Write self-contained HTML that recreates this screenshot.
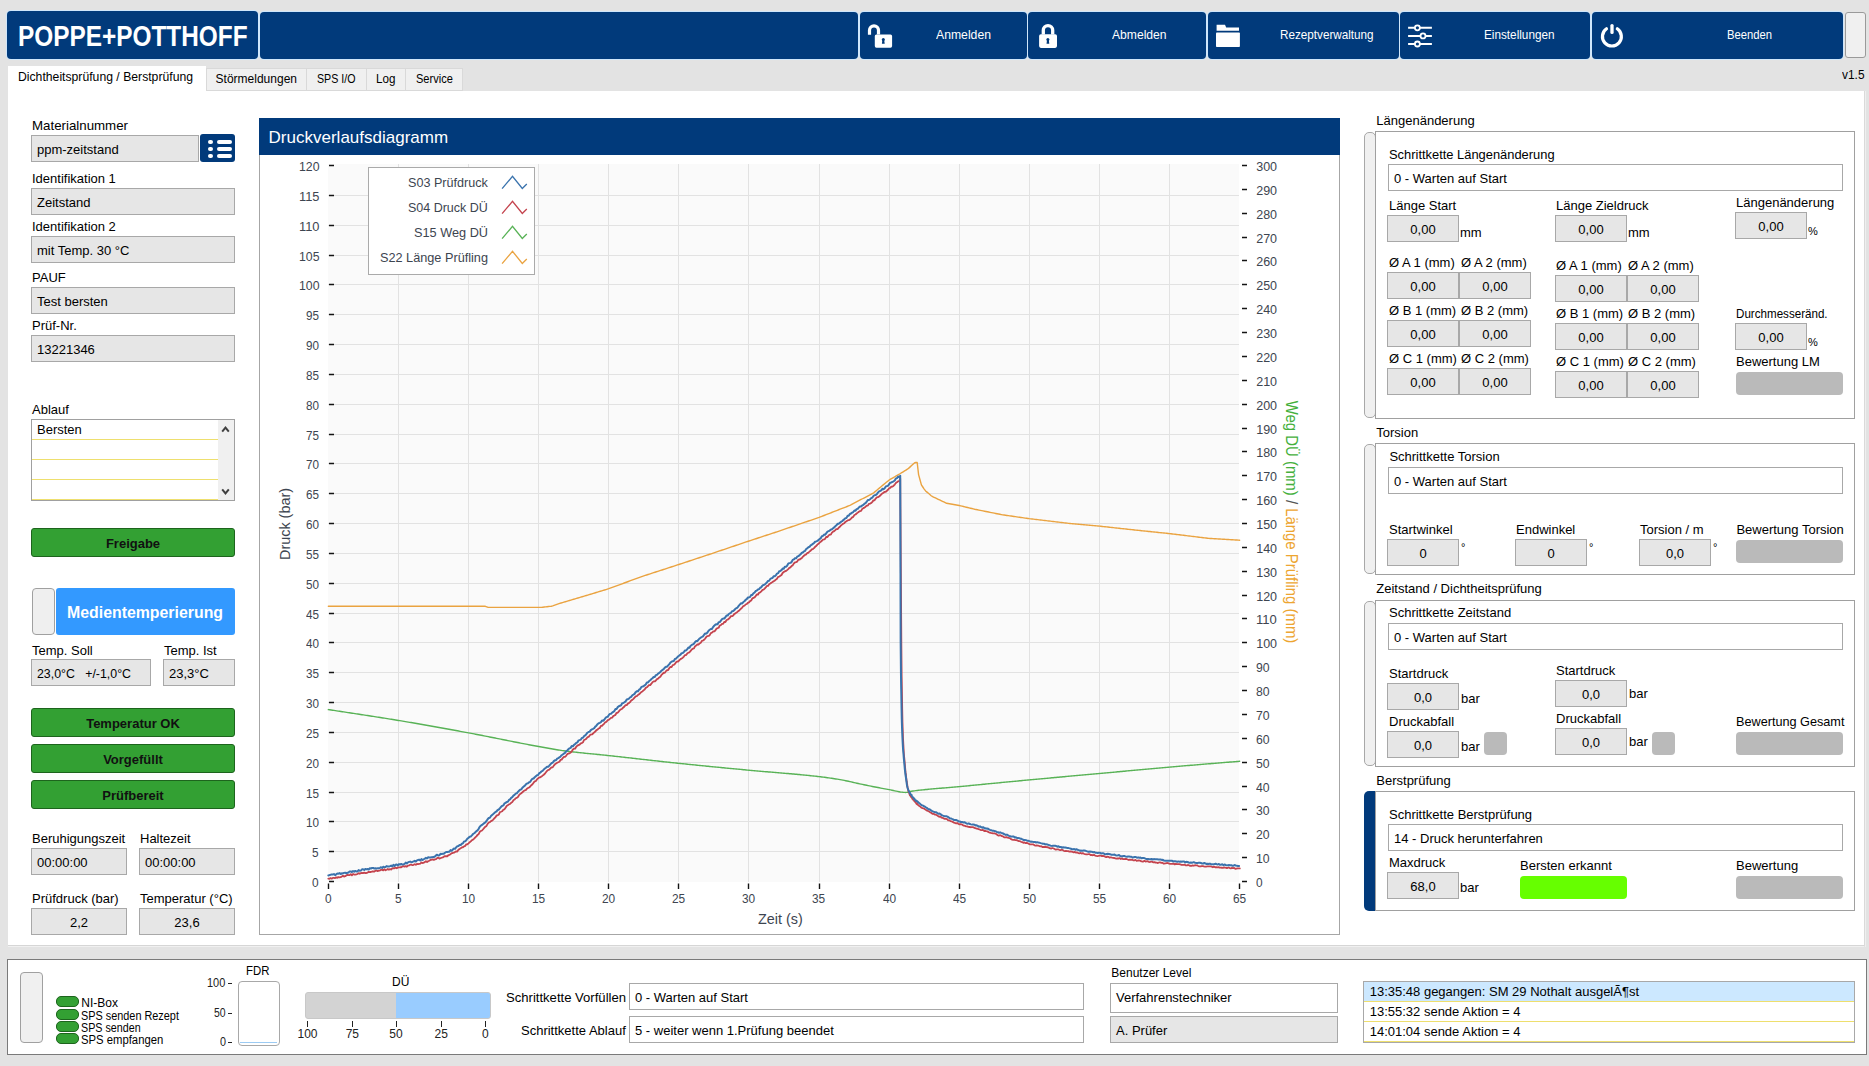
<!DOCTYPE html>
<html><head><meta charset="utf-8"><title>Druckverlauf</title>
<style>
html,body{margin:0;padding:0;}
body{width:1869px;height:1066px;position:relative;overflow:hidden;background:#e3e3e3;font-family:"Liberation Sans",sans-serif;}
.a{position:absolute;}
.t{position:absolute;white-space:pre;line-height:0;transform-origin:0 0;}
</style></head><body>
<div class="a" style="left:7px;top:11px;width:251px;height:48px;background:#013a7b;border-radius:4px;box-shadow:0 0 0 1px #cfe6fb;"></div>
<div class="t" style="left:18.20px;top:36.35px;font-size:29px;color:#fff;font-weight:bold;transform:scaleX(0.8406);">POPPE+POTTHOFF</div>
<div class="a" style="left:260px;top:12px;width:598px;height:47px;background:#013a7b;border-radius:4px;box-shadow:0 0 0 1px #cfe6fb;"></div>
<div class="a" style="left:860px;top:12px;width:167px;height:47px;background:#013a7b;border-radius:4px;box-shadow:0 0 0 1px #cfe6fb;"></div>
<div class="a" style="left:1028px;top:12px;width:178px;height:47px;background:#013a7b;border-radius:4px;box-shadow:0 0 0 1px #cfe6fb;"></div>
<div class="a" style="left:1208px;top:12px;width:191px;height:47px;background:#013a7b;border-radius:4px;box-shadow:0 0 0 1px #cfe6fb;"></div>
<div class="a" style="left:1400px;top:12px;width:190px;height:47px;background:#013a7b;border-radius:4px;box-shadow:0 0 0 1px #cfe6fb;"></div>
<div class="a" style="left:1592px;top:12px;width:251px;height:47px;background:#013a7b;border-radius:4px;box-shadow:0 0 0 1px #cfe6fb;"></div>
<div class="a" style="left:1845px;top:12px;width:21px;height:46px;background:#f0f0f0;border:1px solid #9a9a9a;box-sizing:border-box;border-radius:3px;"></div>
<svg class="a" style="left:0;top:0" width="1869" height="70" viewBox="0 0 1869 70">
<g fill="#fff">
<path d="M869.5,34.7 V30.35 A4.5,4.5 0 0 1 878.5,30.35 V34.4" fill="none" stroke="#fff" stroke-width="3.2"/>
<rect x="874.8" y="34.4" width="17.3" height="13.3" rx="1.6"/>
<path d="M1043.3,34.4 V30.2 A4.7,4.7 0 0 1 1052.7,30.2 V34.4" fill="none" stroke="#fff" stroke-width="3.3"/>
<rect x="1039.1" y="34.2" width="17.9" height="13.7" rx="1.8"/>
<path d="M1216.6,24.75 H1225 L1226.2,27.6 H1239 V30.8 H1216.6 Z"/>
<rect x="1216" y="32.5" width="23.9" height="14.55" rx="0.8"/>
<path d="M1408.1,27.8 H1431.9 M1408.1,35.9 H1431.9 M1408.1,44 H1431.9" stroke="#fff" stroke-width="2"/>
<path d="M1606.5,28.8 A9.45,9.45 0 1 0 1617.3,28.8" fill="none" stroke="#fff" stroke-width="3.2" stroke-linecap="round"/>
<path d="M1612,25.6 V32.4" stroke="#fff" stroke-width="3.3" stroke-linecap="round"/>
</g>
<g fill="#013a7b">
<circle cx="883.3" cy="39.4" r="1.5"/><path d="M882.4,40 L881.9,43.7 H884.7 L884.2,40 Z"/>
<circle cx="1047.9" cy="39.45" r="1.5"/><path d="M1047,40 L1046.5,43.7 H1049.3 L1048.8,40 Z"/>
</g>
<g fill="#013a7b" stroke="#fff" stroke-width="1.8">
<circle cx="1417.4" cy="27.8" r="2.5"/><circle cx="1423" cy="35.9" r="2.5"/><circle cx="1417.4" cy="44" r="2.5"/>
</g>
</svg>
<div class="t" style="left:936.00px;top:34.50px;font-size:13px;color:#fff;transform:scaleX(0.9396);">Anmelden</div>
<div class="t" style="left:1112.00px;top:34.50px;font-size:13px;color:#fff;transform:scaleX(0.9327);">Abmelden</div>
<div class="t" style="left:1280.40px;top:34.50px;font-size:13px;color:#fff;transform:scaleX(0.8995);">Rezeptverwaltung</div>
<div class="t" style="left:1483.50px;top:34.50px;font-size:13px;color:#fff;transform:scaleX(0.9032);">Einstellungen</div>
<div class="t" style="left:1726.60px;top:34.50px;font-size:13px;color:#fff;transform:scaleX(0.8645);">Beenden</div>
<div class="a" style="left:8px;top:66px;width:198px;height:26px;background:#fff;"></div>
<div class="t" style="left:17.50px;top:76.84px;font-size:12px;color:#000;transform:scaleX(1.0169);">Dichtheitsprüfung / Berstprüfung</div>
<div class="a" style="left:206px;top:68px;width:101px;height:23px;background:#f0f0f0;border:1px solid #d9d9d9;box-sizing:border-box;"></div>
<div class="t" style="left:215.60px;top:78.84px;font-size:12px;color:#000;">Störmeldungen</div>
<div class="a" style="left:306px;top:68px;width:61px;height:23px;background:#f0f0f0;border:1px solid #d9d9d9;box-sizing:border-box;"></div>
<div class="t" style="left:317.30px;top:78.84px;font-size:12px;color:#000;transform:scaleX(0.8882);">SPS I/O</div>
<div class="a" style="left:366px;top:68px;width:40px;height:23px;background:#f0f0f0;border:1px solid #d9d9d9;box-sizing:border-box;"></div>
<div class="t" style="left:376.30px;top:78.84px;font-size:12px;color:#000;transform:scaleX(0.9690);">Log</div>
<div class="a" style="left:405px;top:68px;width:58px;height:23px;background:#f0f0f0;border:1px solid #d9d9d9;box-sizing:border-box;"></div>
<div class="t" style="left:416.40px;top:78.84px;font-size:12px;color:#000;transform:scaleX(0.9197);">Service</div>
<div class="t" style="left:1842.00px;top:74.84px;font-size:12px;color:#000;transform:scaleX(0.9920);">v1.5</div>
<div class="a" style="left:8px;top:91px;width:1856px;height:854px;background:#fff;"></div>
<div class="a" style="left:8px;top:945px;width:1856px;height:1px;background:#d6d6d6;"></div>
<div class="a" style="left:8px;top:946px;width:1856px;height:1px;background:#f0f0f0;"></div>
<div class="a" style="left:1864px;top:91px;width:1px;height:855px;background:#dadada;"></div>
<div class="a" style="left:1865px;top:91px;width:1px;height:856px;background:#efefef;"></div>
<div class="t" style="left:32.00px;top:125.50px;font-size:13px;color:#000;transform:scaleX(1.0222);">Materialnummer</div>
<div class="a" style="left:31px;top:135px;width:168px;height:27px;background:#e6e6e6;border:1px solid #a8a8a8;box-sizing:border-box;"></div>
<div class="t" style="left:37.00px;top:149.50px;font-size:13px;color:#000;">ppm-zeitstand</div>
<div class="a" style="left:200px;top:134px;width:35px;height:28px;background:#013a7b;border-radius:3px;"></div>
<div class="a" style="left:208px;top:140.10px;width:4.9px;height:3.8px;border-radius:2px;background:#fff"></div>
<div class="a" style="left:216.6px;top:140.10px;width:15.2px;height:3.8px;border-radius:2px;background:#fff"></div>
<div class="a" style="left:208px;top:147.05px;width:4.9px;height:3.8px;border-radius:2px;background:#fff"></div>
<div class="a" style="left:216.6px;top:147.05px;width:15.2px;height:3.8px;border-radius:2px;background:#fff"></div>
<div class="a" style="left:208px;top:154.00px;width:4.9px;height:3.8px;border-radius:2px;background:#fff"></div>
<div class="a" style="left:216.6px;top:154.00px;width:15.2px;height:3.8px;border-radius:2px;background:#fff"></div>
<div class="t" style="left:32.00px;top:179.00px;font-size:13px;color:#000;">Identifikation 1</div>
<div class="a" style="left:31px;top:188px;width:204px;height:27px;background:#e6e6e6;border:1px solid #a8a8a8;box-sizing:border-box;"></div>
<div class="t" style="left:37.00px;top:202.50px;font-size:13px;color:#000;">Zeitstand</div>
<div class="t" style="left:32.00px;top:226.50px;font-size:13px;color:#000;">Identifikation 2</div>
<div class="a" style="left:31px;top:236px;width:204px;height:27px;background:#e6e6e6;border:1px solid #a8a8a8;box-sizing:border-box;"></div>
<div class="t" style="left:37.00px;top:250.50px;font-size:13px;color:#000;">mit Temp. 30 °C</div>
<div class="t" style="left:32.00px;top:277.50px;font-size:13px;color:#000;">PAUF</div>
<div class="a" style="left:31px;top:287px;width:204px;height:27px;background:#e6e6e6;border:1px solid #a8a8a8;box-sizing:border-box;"></div>
<div class="t" style="left:37.00px;top:301.50px;font-size:13px;color:#000;">Test bersten</div>
<div class="t" style="left:32.00px;top:325.50px;font-size:13px;color:#000;">Prüf-Nr.</div>
<div class="a" style="left:31px;top:335px;width:204px;height:27px;background:#e6e6e6;border:1px solid #a8a8a8;box-sizing:border-box;"></div>
<div class="t" style="left:37.00px;top:349.50px;font-size:13px;color:#000;">13221346</div>
<div class="t" style="left:32.00px;top:409.50px;font-size:13px;color:#000;">Ablauf</div>
<div class="a" style="left:31px;top:419px;width:204px;height:82px;background:#fff;border:1px solid #a0a0a0;box-sizing:border-box;"></div>
<div class="a" style="left:218px;top:420px;width:16px;height:80px;background:#f0f0f0;"></div>
<svg class="a" style="left:0;top:0" width="300" height="520" viewBox="0 0 300 520"><path d="M222.2,431.6 L225.5,427.6 L228.8,431.6 M222.2,489.4 L225.5,493.4 L228.8,489.4" fill="none" stroke="#404040" stroke-width="2"/></svg>
<div class="a" style="left:32px;top:439px;width:186px;height:1px;background:#eedf6e;"></div>
<div class="a" style="left:32px;top:459px;width:186px;height:1px;background:#eedf6e;"></div>
<div class="a" style="left:32px;top:479px;width:186px;height:1px;background:#eedf6e;"></div>
<div class="a" style="left:32px;top:499px;width:186px;height:1px;background:#eedf6e;"></div>
<div class="t" style="left:37.00px;top:429.50px;font-size:13px;color:#000;">Bersten</div>
<div class="a" style="left:31px;top:528px;width:204px;height:29px;background:#33a033;border:1px solid #1d641d;box-sizing:border-box;border-radius:3px;"></div>
<div class="t" style="left:105.91px;top:543.50px;font-size:13px;color:#111;font-weight:bold;">Freigabe</div>
<div class="a" style="left:32px;top:588px;width:23px;height:47px;background:#efefef;border:1px solid #a0a0a0;box-sizing:border-box;border-radius:4px;"></div>
<div class="a" style="left:56px;top:588px;width:179px;height:47px;background:#3399ff;border-radius:3px;"></div>
<div class="t" style="left:66.70px;top:613.46px;font-size:16px;color:#fff;font-weight:bold;transform:scaleX(0.9914);">Medientemperierung</div>
<div class="t" style="left:32.00px;top:650.50px;font-size:13px;color:#000;">Temp. Soll</div>
<div class="t" style="left:164.00px;top:650.50px;font-size:13px;color:#000;">Temp. Ist</div>
<div class="a" style="left:31px;top:659px;width:120px;height:27px;background:#e6e6e6;border:1px solid #a8a8a8;box-sizing:border-box;"></div>
<div class="t" style="left:37.00px;top:673.50px;font-size:13px;color:#000;transform:scaleX(0.9503);">23,0°C   +/-1,0°C</div>
<div class="a" style="left:163px;top:659px;width:72px;height:27px;background:#e6e6e6;border:1px solid #a8a8a8;box-sizing:border-box;"></div>
<div class="t" style="left:169.00px;top:673.50px;font-size:13px;color:#000;">23,3°C</div>
<div class="a" style="left:31px;top:708px;width:204px;height:29px;background:#33a033;border:1px solid #1d641d;box-sizing:border-box;border-radius:3px;"></div>
<div class="t" style="left:86.17px;top:723.50px;font-size:13px;color:#111;font-weight:bold;">Temperatur OK</div>
<div class="a" style="left:31px;top:744px;width:204px;height:29px;background:#33a033;border:1px solid #1d641d;box-sizing:border-box;border-radius:3px;"></div>
<div class="t" style="left:103.15px;top:759.50px;font-size:13px;color:#111;font-weight:bold;">Vorgefüllt</div>
<div class="a" style="left:31px;top:780px;width:204px;height:29px;background:#33a033;border:1px solid #1d641d;box-sizing:border-box;border-radius:3px;"></div>
<div class="t" style="left:102.30px;top:795.50px;font-size:13px;color:#111;font-weight:bold;">Prüfbereit</div>
<div class="t" style="left:32.00px;top:838.50px;font-size:13px;color:#000;">Beruhigungszeit</div>
<div class="t" style="left:140.00px;top:838.50px;font-size:13px;color:#000;">Haltezeit</div>
<div class="a" style="left:31px;top:848px;width:96px;height:27px;background:#e6e6e6;border:1px solid #a8a8a8;box-sizing:border-box;"></div>
<div class="t" style="left:37.00px;top:862.50px;font-size:13px;color:#000;">00:00:00</div>
<div class="a" style="left:139px;top:848px;width:96px;height:27px;background:#e6e6e6;border:1px solid #a8a8a8;box-sizing:border-box;"></div>
<div class="t" style="left:145.00px;top:862.50px;font-size:13px;color:#000;">00:00:00</div>
<div class="t" style="left:32.00px;top:898.50px;font-size:13px;color:#000;">Prüfdruck (bar)</div>
<div class="t" style="left:140.00px;top:898.50px;font-size:13px;color:#000;">Temperatur (°C)</div>
<div class="a" style="left:31px;top:908px;width:96px;height:27px;background:#e6e6e6;border:1px solid #a8a8a8;box-sizing:border-box;"></div>
<div class="t" style="left:69.96px;top:922.50px;font-size:13px;color:#000;">2,2</div>
<div class="a" style="left:139px;top:908px;width:96px;height:27px;background:#e6e6e6;border:1px solid #a8a8a8;box-sizing:border-box;"></div>
<div class="t" style="left:174.35px;top:922.50px;font-size:13px;color:#000;">23,6</div>
<div class="a" style="left:259px;top:118px;width:1081px;height:817px;background:#fff;border:1px solid #a6a6a6;box-sizing:border-box;"></div>
<div class="a" style="left:259px;top:118px;width:1081px;height:37px;background:#013a7b;"></div>
<div class="t" style="left:268.60px;top:138.11px;font-size:17px;color:#fff;">Druckverlaufsdiagramm</div>
<svg class="a" style="left:0;top:0" width="1869" height="1066" viewBox="0 0 1869 1066">
<rect x="328" y="164" width="911" height="718" fill="#fafafa"/>
<path d="M398.5,164V882M468.5,164V882M538.5,164V882M608.5,164V882M678.5,164V882M748.5,164V882M819.5,164V882M889.5,164V882M959.5,164V882M1029.5,164V882M1099.5,164V882M1169.5,164V882M328,851.5H1239M328,821.5H1239M328,792.5H1239M328,762.5H1239M328,732.5H1239M328,702.5H1239M328,672.5H1239M328,642.5H1239M328,613.5H1239M328,583.5H1239M328,553.5H1239M328,523.5H1239M328,493.5H1239M328,463.5H1239M328,434.5H1239M328,404.5H1239M328,374.5H1239M328,344.5H1239M328,314.5H1239M328,284.5H1239M328,255.5H1239M328,225.5H1239M328,195.5H1239" stroke="#e2e2e2" stroke-width="1" fill="none"/>
<path d="M329,881.5H334M329,851.5H334M329,821.5H334M329,792.5H334M329,762.5H334M329,732.5H334M329,702.5H334M329,672.5H334M329,642.5H334M329,613.5H334M329,583.5H334M329,553.5H334M329,523.5H334M329,493.5H334M329,463.5H334M329,434.5H334M329,404.5H334M329,374.5H334M329,344.5H334M329,314.5H334M329,284.5H334M329,255.5H334M329,225.5H334M329,195.5H334M329,165.5H334M1242,881.5H1247M1242,857.5H1247M1242,833.5H1247M1242,809.5H1247M1242,786.5H1247M1242,762.5H1247M1242,738.5H1247M1242,714.5H1247M1242,690.5H1247M1242,666.5H1247M1242,642.5H1247M1242,618.5H1247M1242,595.5H1247M1242,571.5H1247M1242,547.5H1247M1242,523.5H1247M1242,499.5H1247M1242,475.5H1247M1242,451.5H1247M1242,428.5H1247M1242,404.5H1247M1242,380.5H1247M1242,356.5H1247M1242,332.5H1247M1242,308.5H1247M1242,284.5H1247M1242,260.5H1247M1242,237.5H1247M1242,213.5H1247M1242,189.5H1247M1242,165.5H1247M328.5,883.6V889M398.5,883.6V889M468.5,883.6V889M538.5,883.6V889M608.5,883.6V889M678.5,883.6V889M748.5,883.6V889M819.5,883.6V889M889.5,883.6V889M959.5,883.6V889M1029.5,883.6V889M1099.5,883.6V889M1169.5,883.6V889M1239.5,883.6V889" stroke="#141414" stroke-width="1.4" fill="none"/>
<g fill="none" stroke-linejoin="round" stroke-linecap="round">
<path d="M328.35,606.32 L329.75,606.32 L331.15,606.32 L332.56,606.32 L333.96,606.32 L335.36,606.32 L336.76,606.32 L338.16,606.32 L339.57,606.32 L340.97,606.32 L342.37,606.32 L343.77,606.32 L345.17,606.32 L346.58,606.32 L347.98,606.32 L349.38,606.32 L350.78,606.32 L352.18,606.32 L353.59,606.32 L354.99,606.32 L356.39,606.32 L357.79,606.32 L359.19,606.32 L360.60,606.32 L362.00,606.32 L363.40,606.32 L364.80,606.32 L366.20,606.32 L367.61,606.32 L369.01,606.32 L370.41,606.32 L371.81,606.32 L373.21,606.32 L374.62,606.32 L376.02,606.32 L377.42,606.32 L378.82,606.32 L380.22,606.32 L381.63,606.32 L383.03,606.32 L384.43,606.32 L385.83,606.32 L387.23,606.32 L388.64,606.32 L390.04,606.32 L391.44,606.32 L392.84,606.32 L394.24,606.32 L395.65,606.32 L397.05,606.32 L398.45,606.32 L399.85,606.32 L401.25,606.32 L402.66,606.32 L404.06,606.32 L405.46,606.32 L406.86,606.32 L408.26,606.32 L409.67,606.32 L411.07,606.32 L412.47,606.32 L413.87,606.32 L415.27,606.32 L416.68,606.32 L418.08,606.32 L419.48,606.32 L420.88,606.32 L422.28,606.32 L423.69,606.32 L425.09,606.32 L426.49,606.32 L427.89,606.32 L429.29,606.32 L430.70,606.32 L432.10,606.32 L433.50,606.32 L434.90,606.32 L436.30,606.32 L437.71,606.32 L439.11,606.32 L440.51,606.32 L441.91,606.32 L443.31,606.32 L444.72,606.32 L446.12,606.32 L447.52,606.32 L448.92,606.32 L450.32,606.32 L451.73,606.32 L453.13,606.32 L454.53,606.32 L455.93,606.32 L457.33,606.32 L458.74,606.32 L460.14,606.32 L461.54,606.32 L462.94,606.32 L464.34,606.32 L465.75,606.32 L467.15,606.32 L468.55,606.32 L469.95,606.32 L471.35,606.32 L472.76,606.32 L474.16,606.32 L475.56,606.32 L476.96,606.32 L478.36,606.32 L479.77,606.32 L481.17,606.32 L482.57,606.32 L483.97,606.32 L485.37,606.32 L486.78,606.83 L488.18,607.34 L489.58,607.34 L490.98,607.34 L492.38,607.34 L493.79,607.34 L495.19,607.34 L496.59,607.34 L497.99,607.34 L499.39,607.34 L500.80,607.34 L502.20,607.34 L503.60,607.34 L505.00,607.34 L506.40,607.34 L507.81,607.34 L509.21,607.34 L510.61,607.34 L512.01,607.34 L513.41,607.34 L514.82,607.34 L516.22,607.34 L517.62,607.34 L519.02,607.34 L520.42,607.34 L521.83,607.34 L523.23,607.34 L524.63,607.34 L526.03,607.34 L527.43,607.34 L528.84,607.34 L530.24,607.34 L531.64,607.34 L533.04,607.34 L534.44,607.34 L535.85,607.34 L537.25,607.34 L538.65,607.34 L540.05,607.34 L541.45,607.34 L542.86,607.18 L544.26,607.03 L545.66,606.87 L547.06,606.71 L548.46,606.56 L549.87,606.40 L551.27,606.25 L552.67,605.86 L554.07,605.38 L555.47,604.90 L556.88,604.42 L558.28,603.94 L559.68,603.46 L561.08,602.97 L562.48,602.56 L563.89,602.15 L565.29,601.74 L566.69,601.32 L568.09,600.91 L569.49,600.50 L570.90,600.09 L572.30,599.68 L573.70,599.26 L575.10,598.85 L576.50,598.44 L577.91,598.03 L579.31,597.61 L580.71,597.20 L582.11,596.79 L583.51,596.37 L584.92,595.94 L586.32,595.52 L587.72,595.09 L589.12,594.66 L590.52,594.24 L591.93,593.81 L593.33,593.38 L594.73,592.96 L596.13,592.53 L597.53,592.11 L598.94,591.68 L600.34,591.25 L601.74,590.83 L603.14,590.40 L604.54,589.97 L605.95,589.55 L607.35,589.12 L608.75,588.69 L610.15,588.18 L611.55,587.66 L612.96,587.15 L614.36,586.63 L615.76,586.12 L617.16,585.60 L618.56,585.09 L619.97,584.57 L621.37,584.06 L622.77,583.54 L624.17,583.03 L625.57,582.51 L626.98,582.00 L628.38,581.48 L629.78,580.96 L631.18,580.45 L632.58,579.93 L633.99,579.42 L635.39,578.90 L636.79,578.39 L638.19,577.87 L639.59,577.36 L641.00,576.84 L642.40,576.33 L643.80,575.87 L645.20,575.42 L646.60,574.96 L648.01,574.51 L649.41,574.05 L650.81,573.60 L652.21,573.14 L653.61,572.69 L655.02,572.23 L656.42,571.78 L657.82,571.32 L659.22,570.87 L660.62,570.41 L662.03,569.96 L663.43,569.50 L664.83,569.05 L666.23,568.59 L667.63,568.14 L669.04,567.68 L670.44,567.23 L671.84,566.77 L673.24,566.32 L674.64,565.86 L676.05,565.41 L677.45,564.95 L678.85,564.50 L680.25,564.03 L681.65,563.57 L683.06,563.10 L684.46,562.64 L685.86,562.17 L687.26,561.71 L688.66,561.24 L690.07,560.78 L691.47,560.31 L692.87,559.85 L694.27,559.38 L695.67,558.92 L697.08,558.45 L698.48,557.99 L699.88,557.52 L701.28,557.06 L702.68,556.59 L704.09,556.13 L705.49,555.66 L706.89,555.20 L708.29,554.73 L709.69,554.27 L711.10,553.80 L712.50,553.33 L713.90,552.85 L715.30,552.38 L716.70,551.91 L718.11,551.43 L719.51,550.96 L720.91,550.49 L722.31,550.01 L723.71,549.54 L725.12,549.06 L726.52,548.59 L727.92,548.12 L729.32,547.64 L730.72,547.17 L732.13,546.70 L733.53,546.22 L734.93,545.75 L736.33,545.28 L737.73,544.80 L739.14,544.33 L740.54,543.86 L741.94,543.38 L743.34,542.91 L744.74,542.43 L746.15,541.96 L747.55,541.49 L748.95,541.01 L750.35,540.55 L751.75,540.09 L753.16,539.63 L754.56,539.17 L755.96,538.71 L757.36,538.25 L758.76,537.79 L760.17,537.33 L761.57,536.87 L762.97,536.41 L764.37,535.95 L765.77,535.49 L767.18,535.03 L768.58,534.57 L769.98,534.11 L771.38,533.65 L772.78,533.19 L774.19,532.73 L775.59,532.27 L776.99,531.79 L778.39,531.31 L779.79,530.83 L781.20,530.35 L782.60,529.87 L784.00,529.39 L785.40,528.91 L786.80,528.43 L788.21,527.95 L789.61,527.47 L791.01,527.00 L792.41,526.52 L793.81,526.04 L795.22,525.56 L796.62,525.08 L798.02,524.60 L799.42,524.12 L800.82,523.64 L802.23,523.16 L803.63,522.68 L805.03,522.20 L806.43,521.73 L807.83,521.25 L809.24,520.77 L810.64,520.29 L812.04,519.81 L813.44,519.33 L814.84,518.85 L816.25,518.37 L817.65,517.89 L819.05,517.41 L820.45,516.87 L821.85,516.32 L823.26,515.77 L824.66,515.23 L826.06,514.68 L827.46,514.13 L828.86,513.59 L830.27,513.04 L831.67,512.49 L833.07,511.95 L834.47,511.40 L835.87,510.85 L837.28,510.31 L838.68,509.76 L840.08,509.21 L841.48,508.67 L842.88,508.12 L844.29,507.57 L845.69,507.03 L847.09,506.48 L848.49,505.93 L849.89,505.39 L851.30,504.70 L852.70,503.96 L854.10,503.21 L855.50,502.47 L856.90,501.73 L858.31,500.98 L859.71,500.24 L861.11,499.49 L862.51,498.75 L863.91,498.01 L865.32,497.26 L866.72,496.52 L868.12,495.77 L869.52,495.03 L870.92,494.28 L872.33,493.54 L873.73,492.80 L875.13,491.63 L876.53,490.47 L877.93,489.31 L879.34,488.15 L880.74,486.98 L882.14,485.82 L883.54,484.66 L884.94,483.50 L886.35,482.33 L887.75,481.17 L889.15,480.01 L890.55,479.20 L891.95,478.38 L893.36,477.57 L894.76,476.75 L896.16,475.94 L897.56,475.12 L898.96,474.31 L900.37,473.50 L901.77,472.64 L903.17,471.78 L904.57,470.92 L905.97,470.06 L907.38,469.21 L908.78,468.14 L910.18,466.86 L911.58,465.58 L912.98,464.29 L914.39,463.01 L915.79,462.50 L917.19,462.50 L918.59,474.57 L919.99,479.74 L921.40,484.91 L922.80,487.01 L924.20,489.11 L925.60,490.94 L927.00,492.14 L928.41,493.33 L929.81,494.53 L931.21,495.72 L932.61,496.60 L934.01,497.27 L935.42,497.95 L936.82,498.62 L938.22,499.29 L939.62,499.96 L941.02,500.63 L942.43,501.30 L943.83,501.97 L945.23,502.64 L946.63,503.31 L948.03,503.56 L949.44,503.80 L950.84,504.05 L952.24,504.29 L953.64,504.54 L955.04,504.79 L956.45,505.03 L957.85,505.28 L959.25,505.52 L960.65,505.86 L962.05,506.19 L963.46,506.53 L964.86,506.87 L966.26,507.20 L967.66,507.54 L969.06,507.88 L970.47,508.21 L971.87,508.55 L973.27,508.88 L974.67,509.22 L976.07,509.51 L977.48,509.79 L978.88,510.07 L980.28,510.35 L981.68,510.63 L983.08,510.92 L984.49,511.20 L985.89,511.48 L987.29,511.76 L988.69,512.04 L990.09,512.32 L991.50,512.60 L992.90,512.88 L994.30,513.16 L995.70,513.44 L997.10,513.72 L998.51,514.00 L999.91,514.29 L1001.31,514.57 L1002.71,514.85 L1004.11,515.06 L1005.52,515.26 L1006.92,515.46 L1008.32,515.66 L1009.72,515.86 L1011.12,516.06 L1012.53,516.26 L1013.93,516.47 L1015.33,516.67 L1016.73,516.87 L1018.13,517.07 L1019.54,517.27 L1020.94,517.47 L1022.34,517.67 L1023.74,517.87 L1025.14,518.07 L1026.55,518.27 L1027.95,518.47 L1029.35,518.67 L1030.75,518.83 L1032.15,519.00 L1033.56,519.17 L1034.96,519.33 L1036.36,519.50 L1037.76,519.67 L1039.16,519.83 L1040.57,520.00 L1041.97,520.17 L1043.37,520.33 L1044.77,520.50 L1046.17,520.66 L1047.58,520.83 L1048.98,521.00 L1050.38,521.16 L1051.78,521.33 L1053.18,521.50 L1054.59,521.66 L1055.99,521.83 L1057.39,522.00 L1058.79,522.16 L1060.19,522.33 L1061.60,522.50 L1063.00,522.66 L1064.40,522.83 L1065.80,523.00 L1067.20,523.16 L1068.61,523.33 L1070.01,523.46 L1071.41,523.58 L1072.81,523.71 L1074.21,523.84 L1075.62,523.97 L1077.02,524.09 L1078.42,524.22 L1079.82,524.35 L1081.22,524.48 L1082.63,524.60 L1084.03,524.73 L1085.43,524.86 L1086.83,524.99 L1088.23,525.12 L1089.64,525.24 L1091.04,525.37 L1092.44,525.50 L1093.84,525.63 L1095.24,525.75 L1096.65,525.88 L1098.05,526.01 L1099.45,526.14 L1100.85,526.29 L1102.25,526.44 L1103.66,526.60 L1105.06,526.75 L1106.46,526.90 L1107.86,527.06 L1109.26,527.21 L1110.67,527.37 L1112.07,527.52 L1113.47,527.67 L1114.87,527.83 L1116.27,527.98 L1117.68,528.13 L1119.08,528.29 L1120.48,528.44 L1121.88,528.59 L1123.28,528.75 L1124.69,528.90 L1126.09,529.06 L1127.49,529.21 L1128.89,529.36 L1130.29,529.52 L1131.70,529.67 L1133.10,529.82 L1134.50,529.97 L1135.90,530.12 L1137.30,530.26 L1138.71,530.41 L1140.11,530.55 L1141.51,530.70 L1142.91,530.84 L1144.31,530.99 L1145.72,531.14 L1147.12,531.28 L1148.52,531.43 L1149.92,531.57 L1151.32,531.72 L1152.73,531.86 L1154.13,532.01 L1155.53,532.15 L1156.93,532.30 L1158.33,532.44 L1159.74,532.59 L1161.14,532.73 L1162.54,532.88 L1163.94,533.02 L1165.34,533.17 L1166.75,533.31 L1168.15,533.46 L1169.55,533.61 L1170.95,533.78 L1172.35,533.95 L1173.76,534.12 L1175.16,534.29 L1176.56,534.46 L1177.96,534.63 L1179.36,534.80 L1180.77,534.97 L1182.17,535.14 L1183.57,535.31 L1184.97,535.48 L1186.37,535.65 L1187.78,535.82 L1189.18,536.00 L1190.58,536.17 L1191.98,536.34 L1193.38,536.51 L1194.79,536.68 L1196.19,536.85 L1197.59,537.02 L1198.99,537.19 L1200.39,537.36 L1201.80,537.53 L1203.20,537.70 L1204.60,537.87 L1206.00,538.04 L1207.40,538.21 L1208.81,538.39 L1210.21,538.47 L1211.61,538.55 L1213.01,538.63 L1214.41,538.71 L1215.82,538.79 L1217.22,538.87 L1218.62,538.96 L1220.02,539.04 L1221.42,539.12 L1222.83,539.20 L1224.23,539.28 L1225.63,539.36 L1227.03,539.44 L1228.43,539.53 L1229.84,539.61 L1231.24,539.69 L1232.64,539.77 L1234.04,539.85 L1235.44,539.93 L1236.85,540.01 L1238.25,540.10 L1239.65,540.18" stroke="#eaa340" stroke-width="1.4"/>
<path d="M328.35,709.57 L329.75,709.79 L331.15,710.00 L332.56,710.22 L333.96,710.43 L335.36,710.65 L336.76,710.86 L338.16,711.08 L339.57,711.29 L340.97,711.51 L342.37,711.72 L343.77,711.93 L345.17,712.15 L346.58,712.36 L347.98,712.57 L349.38,712.79 L350.78,713.00 L352.18,713.21 L353.59,713.42 L354.99,713.64 L356.39,713.85 L357.79,714.06 L359.19,714.27 L360.60,714.49 L362.00,714.70 L363.40,714.92 L364.80,715.13 L366.20,715.34 L367.61,715.56 L369.01,715.77 L370.41,715.99 L371.81,716.21 L373.21,716.42 L374.62,716.64 L376.02,716.86 L377.42,717.07 L378.82,717.29 L380.22,717.51 L381.63,717.73 L383.03,717.95 L384.43,718.18 L385.83,718.40 L387.23,718.62 L388.64,718.85 L390.04,719.07 L391.44,719.30 L392.84,719.52 L394.24,719.75 L395.65,719.98 L397.05,720.21 L398.45,720.44 L399.85,720.68 L401.25,720.91 L402.66,721.14 L404.06,721.38 L405.46,721.61 L406.86,721.85 L408.26,722.09 L409.67,722.33 L411.07,722.56 L412.47,722.80 L413.87,723.04 L415.27,723.29 L416.68,723.53 L418.08,723.77 L419.48,724.01 L420.88,724.26 L422.28,724.50 L423.69,724.75 L425.09,724.99 L426.49,725.24 L427.89,725.49 L429.29,725.74 L430.70,725.98 L432.10,726.23 L433.50,726.48 L434.90,726.73 L436.30,726.98 L437.71,727.23 L439.11,727.49 L440.51,727.74 L441.91,727.99 L443.31,728.24 L444.72,728.50 L446.12,728.75 L447.52,729.01 L448.92,729.26 L450.32,729.52 L451.73,729.77 L453.13,730.03 L454.53,730.29 L455.93,730.54 L457.33,730.80 L458.74,731.06 L460.14,731.32 L461.54,731.57 L462.94,731.83 L464.34,732.09 L465.75,732.35 L467.15,732.61 L468.55,732.87 L469.95,733.13 L471.35,733.39 L472.76,733.66 L474.16,733.93 L475.56,734.19 L476.96,734.46 L478.36,734.73 L479.77,735.00 L481.17,735.28 L482.57,735.55 L483.97,735.83 L485.37,736.10 L486.78,736.38 L488.18,736.66 L489.58,736.94 L490.98,737.22 L492.38,737.50 L493.79,737.78 L495.19,738.06 L496.59,738.34 L497.99,738.62 L499.39,738.90 L500.80,739.18 L502.20,739.46 L503.60,739.74 L505.00,740.03 L506.40,740.31 L507.81,740.59 L509.21,740.87 L510.61,741.15 L512.01,741.42 L513.41,741.70 L514.82,741.98 L516.22,742.26 L517.62,742.53 L519.02,742.81 L520.42,743.08 L521.83,743.35 L523.23,743.62 L524.63,743.89 L526.03,744.16 L527.43,744.43 L528.84,744.69 L530.24,744.96 L531.64,745.22 L533.04,745.48 L534.44,745.73 L535.85,745.99 L537.25,746.24 L538.65,746.49 L540.05,746.75 L541.45,747.00 L542.86,747.25 L544.26,747.51 L545.66,747.76 L547.06,748.01 L548.46,748.27 L549.87,748.52 L551.27,748.77 L552.67,749.01 L554.07,749.25 L555.47,749.49 L556.88,749.72 L558.28,749.95 L559.68,750.17 L561.08,750.38 L562.48,750.59 L563.89,750.79 L565.29,750.98 L566.69,751.16 L568.09,751.34 L569.49,751.51 L570.90,751.68 L572.30,751.85 L573.70,752.01 L575.10,752.17 L576.50,752.32 L577.91,752.47 L579.31,752.62 L580.71,752.77 L582.11,752.92 L583.51,753.06 L584.92,753.20 L586.32,753.34 L587.72,753.48 L589.12,753.61 L590.52,753.75 L591.93,753.89 L593.33,754.02 L594.73,754.16 L596.13,754.30 L597.53,754.43 L598.94,754.57 L600.34,754.71 L601.74,754.85 L603.14,754.99 L604.54,755.13 L605.95,755.28 L607.35,755.43 L608.75,755.58 L610.15,755.73 L611.55,755.88 L612.96,756.03 L614.36,756.19 L615.76,756.34 L617.16,756.50 L618.56,756.65 L619.97,756.81 L621.37,756.96 L622.77,757.12 L624.17,757.28 L625.57,757.43 L626.98,757.59 L628.38,757.75 L629.78,757.91 L631.18,758.07 L632.58,758.23 L633.99,758.38 L635.39,758.54 L636.79,758.70 L638.19,758.86 L639.59,759.02 L641.00,759.18 L642.40,759.34 L643.80,759.50 L645.20,759.65 L646.60,759.81 L648.01,759.97 L649.41,760.13 L650.81,760.29 L652.21,760.44 L653.61,760.60 L655.02,760.76 L656.42,760.92 L657.82,761.07 L659.22,761.23 L660.62,761.38 L662.03,761.54 L663.43,761.69 L664.83,761.85 L666.23,762.00 L667.63,762.15 L669.04,762.30 L670.44,762.45 L671.84,762.60 L673.24,762.75 L674.64,762.90 L676.05,763.05 L677.45,763.20 L678.85,763.34 L680.25,763.49 L681.65,763.63 L683.06,763.78 L684.46,763.92 L685.86,764.07 L687.26,764.21 L688.66,764.35 L690.07,764.50 L691.47,764.64 L692.87,764.78 L694.27,764.92 L695.67,765.06 L697.08,765.20 L698.48,765.34 L699.88,765.48 L701.28,765.62 L702.68,765.76 L704.09,765.90 L705.49,766.04 L706.89,766.18 L708.29,766.31 L709.69,766.45 L711.10,766.59 L712.50,766.73 L713.90,766.86 L715.30,767.00 L716.70,767.14 L718.11,767.27 L719.51,767.41 L720.91,767.54 L722.31,767.68 L723.71,767.81 L725.12,767.95 L726.52,768.08 L727.92,768.22 L729.32,768.35 L730.72,768.48 L732.13,768.62 L733.53,768.75 L734.93,768.89 L736.33,769.02 L737.73,769.15 L739.14,769.29 L740.54,769.42 L741.94,769.55 L743.34,769.68 L744.74,769.82 L746.15,769.95 L747.55,770.08 L748.95,770.22 L750.35,770.35 L751.75,770.48 L753.16,770.60 L754.56,770.73 L755.96,770.86 L757.36,770.98 L758.76,771.10 L760.17,771.23 L761.57,771.35 L762.97,771.47 L764.37,771.58 L765.77,771.70 L767.18,771.82 L768.58,771.94 L769.98,772.05 L771.38,772.17 L772.78,772.29 L774.19,772.40 L775.59,772.52 L776.99,772.63 L778.39,772.75 L779.79,772.86 L781.20,772.98 L782.60,773.10 L784.00,773.22 L785.40,773.33 L786.80,773.45 L788.21,773.57 L789.61,773.69 L791.01,773.81 L792.41,773.94 L793.81,774.06 L795.22,774.19 L796.62,774.31 L798.02,774.44 L799.42,774.57 L800.82,774.70 L802.23,774.83 L803.63,774.97 L805.03,775.11 L806.43,775.25 L807.83,775.39 L809.24,775.53 L810.64,775.68 L812.04,775.83 L813.44,775.98 L814.84,776.13 L816.25,776.29 L817.65,776.45 L819.05,776.61 L820.45,776.77 L821.85,776.95 L823.26,777.12 L824.66,777.31 L826.06,777.50 L827.46,777.69 L828.86,777.89 L830.27,778.09 L831.67,778.30 L833.07,778.51 L834.47,778.73 L835.87,778.96 L837.28,779.18 L838.68,779.42 L840.08,779.65 L841.48,779.90 L842.88,780.16 L844.29,780.43 L845.69,780.71 L847.09,781.00 L848.49,781.30 L849.89,781.61 L851.30,781.92 L852.70,782.24 L854.10,782.56 L855.50,782.88 L856.90,783.20 L858.31,783.52 L859.71,783.83 L861.11,784.14 L862.51,784.44 L863.91,784.74 L865.32,785.03 L866.72,785.31 L868.12,785.59 L869.52,785.88 L870.92,786.16 L872.33,786.44 L873.73,786.71 L875.13,786.99 L876.53,787.26 L877.93,787.54 L879.34,787.81 L880.74,788.07 L882.14,788.34 L883.54,788.60 L884.94,788.86 L886.35,789.12 L887.75,789.38 L889.15,789.63 L890.55,789.90 L891.95,790.20 L893.36,790.51 L894.76,790.82 L896.16,791.14 L897.56,791.44 L898.96,791.72 L900.37,791.97 L901.77,792.17 L903.17,792.32 L904.57,792.42 L905.97,792.43 L907.38,792.21 L908.78,791.82 L910.18,791.49 L911.58,791.25 L912.98,791.03 L914.39,790.83 L915.79,790.64 L917.19,790.46 L918.59,790.29 L919.99,790.14 L921.40,789.98 L922.80,789.84 L924.20,789.70 L925.60,789.56 L927.00,789.43 L928.41,789.30 L929.81,789.17 L931.21,789.05 L932.61,788.92 L934.01,788.79 L935.42,788.66 L936.82,788.54 L938.22,788.42 L939.62,788.30 L941.02,788.18 L942.43,788.07 L943.83,787.95 L945.23,787.84 L946.63,787.72 L948.03,787.61 L949.44,787.49 L950.84,787.38 L952.24,787.26 L953.64,787.14 L955.04,787.02 L956.45,786.90 L957.85,786.77 L959.25,786.65 L960.65,786.52 L962.05,786.38 L963.46,786.25 L964.86,786.11 L966.26,785.97 L967.66,785.83 L969.06,785.69 L970.47,785.55 L971.87,785.41 L973.27,785.27 L974.67,785.13 L976.07,785.00 L977.48,784.86 L978.88,784.73 L980.28,784.59 L981.68,784.45 L983.08,784.32 L984.49,784.18 L985.89,784.05 L987.29,783.91 L988.69,783.77 L990.09,783.64 L991.50,783.50 L992.90,783.37 L994.30,783.23 L995.70,783.10 L997.10,782.96 L998.51,782.83 L999.91,782.69 L1001.31,782.56 L1002.71,782.42 L1004.11,782.29 L1005.52,782.15 L1006.92,782.02 L1008.32,781.88 L1009.72,781.75 L1011.12,781.62 L1012.53,781.48 L1013.93,781.35 L1015.33,781.22 L1016.73,781.08 L1018.13,780.95 L1019.54,780.82 L1020.94,780.69 L1022.34,780.55 L1023.74,780.42 L1025.14,780.29 L1026.55,780.16 L1027.95,780.03 L1029.35,779.89 L1030.75,779.76 L1032.15,779.63 L1033.56,779.50 L1034.96,779.37 L1036.36,779.24 L1037.76,779.11 L1039.16,778.98 L1040.57,778.85 L1041.97,778.72 L1043.37,778.59 L1044.77,778.47 L1046.17,778.34 L1047.58,778.21 L1048.98,778.08 L1050.38,777.95 L1051.78,777.82 L1053.18,777.70 L1054.59,777.57 L1055.99,777.44 L1057.39,777.31 L1058.79,777.19 L1060.19,777.06 L1061.60,776.93 L1063.00,776.80 L1064.40,776.68 L1065.80,776.55 L1067.20,776.42 L1068.61,776.30 L1070.01,776.17 L1071.41,776.04 L1072.81,775.92 L1074.21,775.79 L1075.62,775.66 L1077.02,775.54 L1078.42,775.41 L1079.82,775.28 L1081.22,775.16 L1082.63,775.03 L1084.03,774.90 L1085.43,774.77 L1086.83,774.65 L1088.23,774.52 L1089.64,774.39 L1091.04,774.27 L1092.44,774.14 L1093.84,774.01 L1095.24,773.88 L1096.65,773.76 L1098.05,773.63 L1099.45,773.50 L1100.85,773.37 L1102.25,773.25 L1103.66,773.12 L1105.06,772.99 L1106.46,772.86 L1107.86,772.73 L1109.26,772.60 L1110.67,772.47 L1112.07,772.34 L1113.47,772.21 L1114.87,772.08 L1116.27,771.95 L1117.68,771.82 L1119.08,771.70 L1120.48,771.57 L1121.88,771.44 L1123.28,771.31 L1124.69,771.18 L1126.09,771.05 L1127.49,770.92 L1128.89,770.79 L1130.29,770.66 L1131.70,770.53 L1133.10,770.40 L1134.50,770.27 L1135.90,770.14 L1137.30,770.01 L1138.71,769.88 L1140.11,769.75 L1141.51,769.62 L1142.91,769.50 L1144.31,769.37 L1145.72,769.24 L1147.12,769.11 L1148.52,768.98 L1149.92,768.86 L1151.32,768.73 L1152.73,768.60 L1154.13,768.48 L1155.53,768.35 L1156.93,768.22 L1158.33,768.10 L1159.74,767.97 L1161.14,767.85 L1162.54,767.72 L1163.94,767.60 L1165.34,767.48 L1166.75,767.35 L1168.15,767.23 L1169.55,767.11 L1170.95,766.99 L1172.35,766.86 L1173.76,766.74 L1175.16,766.62 L1176.56,766.50 L1177.96,766.38 L1179.36,766.26 L1180.77,766.14 L1182.17,766.02 L1183.57,765.90 L1184.97,765.79 L1186.37,765.67 L1187.78,765.55 L1189.18,765.43 L1190.58,765.31 L1191.98,765.20 L1193.38,765.08 L1194.79,764.96 L1196.19,764.85 L1197.59,764.73 L1198.99,764.61 L1200.39,764.50 L1201.80,764.38 L1203.20,764.26 L1204.60,764.15 L1206.00,764.03 L1207.40,763.92 L1208.81,763.80 L1210.21,763.69 L1211.61,763.57 L1213.01,763.45 L1214.41,763.34 L1215.82,763.22 L1217.22,763.11 L1218.62,762.99 L1220.02,762.88 L1221.42,762.76 L1222.83,762.65 L1224.23,762.53 L1225.63,762.42 L1227.03,762.30 L1228.43,762.18 L1229.84,762.07 L1231.24,761.95 L1232.64,761.84 L1234.04,761.72 L1235.44,761.60 L1236.85,761.49 L1238.25,761.37 L1239.65,761.25" stroke="#58b256" stroke-width="1.4"/>
<path d="M328.35,878.56 L329.47,878.80 L330.59,878.06 L331.71,878.70 L332.84,877.85 L333.96,877.90 L335.08,878.15 L336.20,877.32 L337.32,877.80 L338.44,877.04 L339.57,877.37 L340.69,877.14 L341.81,876.47 L342.93,875.70 L344.05,876.52 L345.17,876.19 L346.30,875.42 L347.42,874.77 L348.54,875.11 L349.66,875.18 L350.78,874.16 L351.90,875.31 L353.03,873.96 L354.15,874.59 L355.27,874.61 L356.39,874.47 L357.51,874.01 L358.63,873.11 L359.75,873.84 L360.88,873.09 L362.00,872.84 L363.12,873.06 L364.24,872.64 L365.36,873.17 L366.48,873.01 L367.61,872.64 L368.73,871.80 L369.85,872.01 L370.97,872.02 L372.09,871.47 L373.21,871.51 L374.34,871.57 L375.46,870.71 L376.58,870.69 L377.70,871.19 L378.82,870.56 L379.94,870.48 L381.07,869.82 L382.19,869.87 L383.31,870.35 L384.43,869.19 L385.55,870.27 L386.67,869.68 L387.79,869.02 L388.92,869.72 L390.04,869.07 L391.16,869.54 L392.28,868.47 L393.40,868.15 L394.52,868.24 L395.65,867.63 L396.77,868.24 L397.89,867.50 L399.01,867.45 L400.13,867.27 L401.25,867.24 L402.38,866.48 L403.50,866.12 L404.62,866.58 L405.74,866.08 L406.86,866.72 L407.98,865.57 L409.11,865.42 L410.23,864.69 L411.35,864.69 L412.47,865.22 L413.59,864.82 L414.71,864.17 L415.83,864.84 L416.96,863.95 L418.08,864.11 L419.20,863.91 L420.32,863.72 L421.44,862.43 L422.56,863.07 L423.69,862.62 L424.81,862.13 L425.93,861.16 L427.05,862.00 L428.17,861.18 L429.29,860.74 L430.42,859.96 L431.54,859.75 L432.66,859.38 L433.78,859.92 L434.90,859.41 L436.02,859.19 L437.15,858.13 L438.27,857.70 L439.39,858.54 L440.51,858.18 L441.63,857.76 L442.75,857.41 L443.87,856.69 L445.00,856.17 L446.12,856.26 L447.24,856.23 L448.36,855.22 L449.48,854.86 L450.60,854.13 L451.73,853.11 L452.85,853.00 L453.97,852.73 L455.09,852.01 L456.21,851.31 L457.33,851.54 L458.46,849.63 L459.58,849.07 L460.70,848.17 L461.82,847.49 L462.94,847.25 L464.06,846.40 L465.19,845.96 L466.31,844.32 L467.43,844.25 L468.55,843.34 L469.67,842.23 L470.79,841.39 L471.91,840.19 L473.04,839.62 L474.16,838.66 L475.28,837.38 L476.40,836.35 L477.52,834.85 L478.64,834.20 L479.77,831.82 L480.89,831.03 L482.01,830.53 L483.13,829.21 L484.25,827.91 L485.37,826.74 L486.50,825.95 L487.62,823.80 L488.74,822.52 L489.86,822.22 L490.98,821.14 L492.10,820.66 L493.23,819.59 L494.35,818.20 L495.47,817.27 L496.59,815.42 L497.71,815.34 L498.83,814.51 L499.95,812.15 L501.08,811.73 L502.20,811.25 L503.32,809.66 L504.44,809.38 L505.56,807.65 L506.68,805.99 L507.81,805.14 L508.93,804.37 L510.05,803.99 L511.17,802.83 L512.29,802.11 L513.41,800.25 L514.54,799.59 L515.66,798.24 L516.78,797.89 L517.90,797.05 L519.02,795.22 L520.14,793.98 L521.27,793.18 L522.39,792.27 L523.51,791.27 L524.63,790.40 L525.75,790.15 L526.87,788.76 L527.99,788.01 L529.12,787.51 L530.24,786.53 L531.36,785.20 L532.48,784.26 L533.60,782.67 L534.72,781.32 L535.85,781.08 L536.97,779.41 L538.09,778.38 L539.21,777.46 L540.33,777.34 L541.45,776.59 L542.58,775.62 L543.70,774.71 L544.82,773.75 L545.94,772.21 L547.06,770.87 L548.18,770.02 L549.31,769.60 L550.43,768.42 L551.55,767.28 L552.67,767.38 L553.79,765.63 L554.91,764.35 L556.03,763.61 L557.16,762.73 L558.28,762.20 L559.40,761.70 L560.52,759.90 L561.64,759.64 L562.76,758.04 L563.89,756.87 L565.01,756.77 L566.13,755.83 L567.25,754.12 L568.37,753.50 L569.49,753.36 L570.62,752.48 L571.74,751.51 L572.86,749.49 L573.98,748.69 L575.10,748.70 L576.22,746.78 L577.35,745.62 L578.47,745.14 L579.59,744.64 L580.71,743.41 L581.83,743.07 L582.95,742.30 L584.07,739.98 L585.20,739.50 L586.32,738.73 L587.44,737.20 L588.56,736.98 L589.68,735.40 L590.80,734.53 L591.93,734.46 L593.05,733.46 L594.17,732.45 L595.29,731.58 L596.41,730.14 L597.53,729.67 L598.66,728.49 L599.78,727.96 L600.90,725.89 L602.02,725.74 L603.14,724.65 L604.26,723.52 L605.39,722.11 L606.51,721.86 L607.63,720.20 L608.75,719.84 L609.87,718.85 L610.99,717.92 L612.11,717.69 L613.24,716.14 L614.36,715.56 L615.48,714.87 L616.60,712.78 L617.72,712.73 L618.84,711.34 L619.97,710.03 L621.09,709.33 L622.21,708.71 L623.33,707.48 L624.45,706.48 L625.57,705.20 L626.70,705.22 L627.82,703.62 L628.94,703.12 L630.06,702.13 L631.18,700.47 L632.30,699.90 L633.43,698.87 L634.55,697.64 L635.67,696.47 L636.79,696.19 L637.91,695.00 L639.03,694.20 L640.15,693.24 L641.28,692.03 L642.40,691.43 L643.52,690.36 L644.64,689.49 L645.76,687.88 L646.88,687.27 L648.01,686.07 L649.13,685.03 L650.25,685.06 L651.37,683.68 L652.49,682.18 L653.61,681.38 L654.74,681.43 L655.86,680.51 L656.98,679.10 L658.10,678.68 L659.22,677.49 L660.34,676.78 L661.47,674.98 L662.59,673.87 L663.71,672.76 L664.83,672.87 L665.95,671.12 L667.07,670.25 L668.19,670.05 L669.32,668.04 L670.44,666.97 L671.56,667.10 L672.68,665.10 L673.80,664.95 L674.92,663.88 L676.05,662.21 L677.17,661.49 L678.29,661.51 L679.41,660.18 L680.53,659.11 L681.65,658.42 L682.78,657.68 L683.90,656.56 L685.02,655.04 L686.14,655.11 L687.26,653.40 L688.38,652.62 L689.51,652.28 L690.63,650.89 L691.75,649.52 L692.87,648.74 L693.99,648.44 L695.11,646.18 L696.23,645.52 L697.36,644.31 L698.48,644.62 L699.60,643.44 L700.72,642.83 L701.84,640.82 L702.96,640.61 L704.09,639.87 L705.21,638.51 L706.33,636.87 L707.45,636.06 L708.57,635.92 L709.69,635.14 L710.82,633.09 L711.94,632.65 L713.06,631.52 L714.18,631.46 L715.30,630.56 L716.42,628.72 L717.55,628.15 L718.67,627.72 L719.79,625.53 L720.91,625.03 L722.03,623.85 L723.15,623.94 L724.27,621.89 L725.40,622.08 L726.52,619.99 L727.64,619.64 L728.76,618.86 L729.88,617.61 L731.00,616.13 L732.13,616.13 L733.25,615.39 L734.37,613.88 L735.49,613.35 L736.61,612.59 L737.73,611.58 L738.86,610.79 L739.98,609.63 L741.10,608.54 L742.22,607.60 L743.34,606.01 L744.46,605.74 L745.59,604.50 L746.71,604.03 L747.83,602.84 L748.95,602.38 L750.07,601.11 L751.19,600.51 L752.31,598.54 L753.44,597.86 L754.56,597.44 L755.68,596.09 L756.80,594.49 L757.92,594.74 L759.04,592.78 L760.17,592.39 L761.29,591.36 L762.41,589.93 L763.53,589.63 L764.65,588.52 L765.77,587.32 L766.90,585.96 L768.02,585.93 L769.14,584.29 L770.26,583.53 L771.38,582.68 L772.50,582.07 L773.63,581.21 L774.75,580.69 L775.87,579.64 L776.99,578.79 L778.11,576.89 L779.23,576.64 L780.35,575.83 L781.48,575.01 L782.60,572.98 L783.72,572.00 L784.84,571.35 L785.96,570.97 L787.08,570.09 L788.21,569.08 L789.33,567.90 L790.45,567.40 L791.57,566.05 L792.69,565.38 L793.81,563.44 L794.94,562.49 L796.06,562.17 L797.18,561.67 L798.30,559.71 L799.42,559.72 L800.54,558.72 L801.67,558.31 L802.79,556.83 L803.91,555.78 L805.03,554.81 L806.15,554.32 L807.27,552.96 L808.39,552.76 L809.52,551.47 L810.64,550.80 L811.76,549.44 L812.88,549.04 L814.00,548.15 L815.12,546.83 L816.25,546.02 L817.37,544.61 L818.49,543.78 L819.61,542.56 L820.73,541.78 L821.85,540.80 L822.98,539.66 L824.10,539.46 L825.22,538.65 L826.34,536.81 L827.46,537.11 L828.58,535.40 L829.71,534.62 L830.83,534.59 L831.95,532.56 L833.07,531.59 L834.19,531.08 L835.31,530.04 L836.43,529.04 L837.56,529.12 L838.68,527.69 L839.80,526.83 L840.92,525.48 L842.04,524.64 L843.16,523.73 L844.29,523.20 L845.41,521.88 L846.53,521.30 L847.65,520.41 L848.77,520.20 L849.89,519.61 L851.02,518.59 L852.14,517.39 L853.26,516.88 L854.38,514.96 L855.50,514.49 L856.62,513.52 L857.75,512.65 L858.87,511.70 L859.99,511.11 L861.11,510.93 L862.23,508.93 L863.35,508.13 L864.47,507.61 L865.60,506.70 L866.72,505.65 L867.84,505.64 L868.96,503.81 L870.08,503.64 L871.20,503.02 L872.33,501.88 L873.45,500.35 L874.57,500.24 L875.69,498.60 L876.81,497.40 L877.93,497.22 L879.06,496.52 L880.18,495.51 L881.30,494.35 L882.42,493.37 L883.54,492.71 L884.66,491.81 L885.79,491.75 L886.91,490.78 L888.03,489.76 L889.15,488.19 L890.27,487.95 L891.39,486.71 L892.51,486.63 L893.64,485.69 L894.76,484.52 L895.88,483.07 L897.00,482.17 L898.12,481.32 L899.24,481.00 L900.23,478.52 L901.35,645.34 L901.63,674.90 L901.91,691.85 L902.19,708.75 L902.47,722.18 L902.75,730.49 L903.03,738.59 L903.31,743.89 L903.59,748.81 L903.87,753.75 L904.15,756.83 L904.43,759.66 L904.71,762.60 L904.99,766.16 L905.27,769.29 L905.55,772.16 L905.83,774.08 L906.11,777.17 L906.39,778.96 L906.68,781.48 L906.96,783.15 L907.24,784.68 L907.52,787.26 L907.80,788.22 L908.08,789.91 L908.36,790.67 L908.64,791.69 L908.92,792.88 L909.20,792.92 L909.48,793.94 L909.76,794.94 L910.04,795.48 L910.32,795.50 L910.60,795.98 L910.88,796.55 L911.16,797.10 L911.44,797.30 L911.72,797.71 L912.00,797.59 L912.28,798.77 L912.56,798.45 L912.84,798.74 L913.12,799.80 L913.40,799.39 L913.69,799.95 L913.97,800.12 L914.25,801.05 L914.53,801.30 L914.81,801.61 L915.09,801.35 L915.37,802.05 L915.65,802.57 L915.93,802.81 L916.21,803.24 L916.49,803.74 L916.77,803.97 L917.05,803.54 L917.33,804.33 L917.61,803.96 L917.89,804.87 L919.01,805.79 L920.13,806.44 L921.26,807.57 L922.38,808.16 L923.50,808.33 L924.62,809.09 L925.74,809.81 L926.86,810.61 L927.99,810.94 L929.11,811.50 L930.23,812.43 L931.35,812.80 L932.47,813.95 L933.59,813.80 L934.72,814.55 L935.84,814.73 L936.96,815.31 L938.08,816.11 L939.20,816.80 L940.32,816.42 L941.44,817.65 L942.57,817.78 L943.69,818.37 L944.81,818.87 L945.93,818.91 L947.05,819.14 L948.17,820.28 L949.30,820.35 L950.42,821.13 L951.54,821.32 L952.66,821.90 L953.78,822.53 L954.90,822.94 L956.03,823.29 L957.15,823.01 L958.27,823.77 L959.39,824.39 L960.51,824.07 L961.63,824.30 L962.76,825.13 L963.88,825.72 L965.00,825.96 L966.12,826.33 L967.24,826.36 L968.36,826.87 L969.48,826.99 L970.61,827.24 L971.73,827.21 L972.85,827.17 L973.97,827.58 L975.09,828.19 L976.21,828.49 L977.34,828.68 L978.46,829.13 L979.58,829.48 L980.70,830.06 L981.82,830.18 L982.94,829.85 L984.07,830.98 L985.19,830.95 L986.31,831.17 L987.43,831.28 L988.55,832.24 L989.67,832.53 L990.80,832.90 L991.92,833.10 L993.04,833.40 L994.16,833.27 L995.28,833.72 L996.40,834.05 L997.52,835.21 L998.65,835.55 L999.77,835.26 L1000.89,835.43 L1002.01,836.19 L1003.13,836.43 L1004.25,837.34 L1005.38,837.31 L1006.50,837.15 L1007.62,837.59 L1008.74,837.90 L1009.86,838.13 L1010.98,839.15 L1012.11,839.62 L1013.23,839.91 L1014.35,839.88 L1015.47,840.05 L1016.59,840.12 L1017.71,840.65 L1018.84,841.03 L1019.96,841.22 L1021.08,841.81 L1022.20,842.02 L1023.32,842.79 L1024.44,842.36 L1025.56,843.17 L1026.69,842.78 L1027.81,843.30 L1028.93,843.89 L1030.05,844.30 L1031.17,844.43 L1032.29,844.30 L1033.42,844.48 L1034.54,845.28 L1035.66,845.56 L1036.78,845.36 L1037.90,845.53 L1039.02,845.95 L1040.15,846.33 L1041.27,846.20 L1042.39,846.99 L1043.51,846.94 L1044.63,847.00 L1045.75,846.75 L1046.87,847.27 L1048.00,847.25 L1049.12,847.86 L1050.24,848.30 L1051.36,848.50 L1052.48,848.03 L1053.60,848.48 L1054.73,849.07 L1055.85,849.55 L1056.97,849.29 L1058.09,849.33 L1059.21,849.77 L1060.33,850.12 L1061.46,849.93 L1062.58,849.88 L1063.70,850.74 L1064.82,851.11 L1065.94,851.01 L1067.06,851.12 L1068.19,851.06 L1069.31,851.71 L1070.43,851.32 L1071.55,851.56 L1072.67,851.97 L1073.79,852.43 L1074.91,851.88 L1076.04,852.69 L1077.16,852.38 L1078.28,853.12 L1079.40,853.30 L1080.52,852.96 L1081.64,853.57 L1082.77,853.11 L1083.89,853.72 L1085.01,854.18 L1086.13,854.31 L1087.25,854.29 L1088.37,854.22 L1089.50,854.11 L1090.62,855.03 L1091.74,854.96 L1092.86,855.29 L1093.98,854.72 L1095.10,855.67 L1096.23,855.91 L1097.35,856.06 L1098.47,855.89 L1099.59,855.56 L1100.71,855.72 L1101.83,856.02 L1102.95,855.91 L1104.08,856.12 L1105.20,856.85 L1106.32,857.13 L1107.44,856.56 L1108.56,856.88 L1109.68,857.71 L1110.81,857.25 L1111.93,857.66 L1113.05,857.81 L1114.17,857.99 L1115.29,858.28 L1116.41,858.58 L1117.54,858.45 L1118.66,858.52 L1119.78,858.07 L1120.90,859.00 L1122.02,858.33 L1123.14,859.19 L1124.27,859.18 L1125.39,858.87 L1126.51,858.99 L1127.63,859.50 L1128.75,859.99 L1129.87,859.71 L1130.99,859.94 L1132.12,859.54 L1133.24,860.36 L1134.36,860.32 L1135.48,859.93 L1136.60,860.88 L1137.72,860.64 L1138.85,860.38 L1139.97,860.54 L1141.09,861.35 L1142.21,861.48 L1143.33,861.57 L1144.45,860.86 L1145.58,861.61 L1146.70,861.26 L1147.82,861.23 L1148.94,861.88 L1150.06,862.05 L1151.18,861.51 L1152.31,861.95 L1153.43,862.40 L1154.55,862.07 L1155.67,862.56 L1156.79,862.71 L1157.91,863.07 L1159.03,862.46 L1160.16,862.41 L1161.28,862.79 L1162.40,862.60 L1163.52,863.58 L1164.64,863.48 L1165.76,863.35 L1166.89,862.99 L1168.01,863.09 L1169.13,863.73 L1170.25,863.96 L1171.37,863.89 L1172.49,863.92 L1173.62,863.60 L1174.74,864.41 L1175.86,863.91 L1176.98,864.07 L1178.10,864.08 L1179.22,864.21 L1180.35,864.46 L1181.47,864.82 L1182.59,864.91 L1183.71,864.96 L1184.83,864.65 L1185.95,865.40 L1187.07,865.38 L1188.20,864.93 L1189.32,865.50 L1190.44,865.76 L1191.56,865.87 L1192.68,865.45 L1193.80,865.75 L1194.93,865.21 L1196.05,865.38 L1197.17,865.36 L1198.29,866.13 L1199.41,866.38 L1200.53,866.45 L1201.66,866.14 L1202.78,866.02 L1203.90,866.35 L1205.02,866.63 L1206.14,866.53 L1207.26,866.41 L1208.39,866.44 L1209.51,866.44 L1210.63,866.43 L1211.75,866.68 L1212.87,867.27 L1213.99,866.66 L1215.11,867.26 L1216.24,867.07 L1217.36,867.33 L1218.48,867.06 L1219.60,867.65 L1220.72,867.68 L1221.84,867.76 L1222.97,867.92 L1224.09,867.30 L1225.21,867.67 L1226.33,867.99 L1227.45,868.00 L1228.57,867.50 L1229.70,868.04 L1230.82,868.39 L1231.94,867.91 L1233.06,868.14 L1234.18,867.89 L1235.30,868.82 L1236.43,868.55 L1237.55,868.30 L1238.67,868.36 L1239.79,868.37" stroke="#c4434d" stroke-width="1.8"/>
<path d="M328.35,875.44 L329.47,875.08 L330.59,874.81 L331.71,874.41 L332.84,874.51 L333.96,874.06 L335.08,875.14 L336.20,874.33 L337.32,873.45 L338.44,873.68 L339.57,873.13 L340.69,874.06 L341.81,873.36 L342.93,873.49 L344.05,872.87 L345.17,872.64 L346.30,873.25 L347.42,872.77 L348.54,872.49 L349.66,871.39 L350.78,871.42 L351.90,872.11 L353.03,871.01 L354.15,871.77 L355.27,870.90 L356.39,871.43 L357.51,871.43 L358.63,870.01 L359.75,870.79 L360.88,870.61 L362.00,869.35 L363.12,869.34 L364.24,870.01 L365.36,868.89 L366.48,869.34 L367.61,868.98 L368.73,869.50 L369.85,868.29 L370.97,868.50 L372.09,867.95 L373.21,867.90 L374.34,868.60 L375.46,868.35 L376.58,868.48 L377.70,868.35 L378.82,868.31 L379.94,867.82 L381.07,867.22 L382.19,867.93 L383.31,866.80 L384.43,867.12 L385.55,867.00 L386.67,866.10 L387.79,866.42 L388.92,866.48 L390.04,866.07 L391.16,865.57 L392.28,866.32 L393.40,864.82 L394.52,865.99 L395.65,864.76 L396.77,864.43 L397.89,865.41 L399.01,864.10 L400.13,864.50 L401.25,863.98 L402.38,864.58 L403.50,864.31 L404.62,863.89 L405.74,862.55 L406.86,863.41 L407.98,862.37 L409.11,861.88 L410.23,861.62 L411.35,862.23 L412.47,861.96 L413.59,861.46 L414.71,860.84 L415.83,861.54 L416.96,860.35 L418.08,860.01 L419.20,859.65 L420.32,860.55 L421.44,858.97 L422.56,859.91 L423.69,859.27 L424.81,858.59 L425.93,857.85 L427.05,858.39 L428.17,857.25 L429.29,857.49 L430.42,857.52 L431.54,857.21 L432.66,857.11 L433.78,856.94 L434.90,856.53 L436.02,855.44 L437.15,854.68 L438.27,855.55 L439.39,855.38 L440.51,853.68 L441.63,853.98 L442.75,853.79 L443.87,853.65 L445.00,852.75 L446.12,852.00 L447.24,852.11 L448.36,851.71 L449.48,851.77 L450.60,850.05 L451.73,850.80 L452.85,849.57 L453.97,848.47 L455.09,848.83 L456.21,847.28 L457.33,846.23 L458.46,845.93 L459.58,844.91 L460.70,845.07 L461.82,843.76 L462.94,843.31 L464.06,841.44 L465.19,841.34 L466.31,840.21 L467.43,838.52 L468.55,837.82 L469.67,836.71 L470.79,836.48 L471.91,835.40 L473.04,834.00 L474.16,833.26 L475.28,832.41 L476.40,831.11 L477.52,830.32 L478.64,828.83 L479.77,826.78 L480.89,825.65 L482.01,824.97 L483.13,824.00 L484.25,823.10 L485.37,822.34 L486.50,821.00 L487.62,819.21 L488.74,818.03 L489.86,817.71 L490.98,816.05 L492.10,815.02 L493.23,814.09 L494.35,813.10 L495.47,811.93 L496.59,811.46 L497.71,809.94 L498.83,809.52 L499.95,808.20 L501.08,806.78 L502.20,805.87 L503.32,805.42 L504.44,803.47 L505.56,802.88 L506.68,801.97 L507.81,801.78 L508.93,800.01 L510.05,799.43 L511.17,797.83 L512.29,797.13 L513.41,795.62 L514.54,794.87 L515.66,793.66 L516.78,793.32 L517.90,791.91 L519.02,790.78 L520.14,789.67 L521.27,789.37 L522.39,787.68 L523.51,786.66 L524.63,785.95 L525.75,784.56 L526.87,783.61 L527.99,783.26 L529.12,782.28 L530.24,781.82 L531.36,779.89 L532.48,778.78 L533.60,778.47 L534.72,777.20 L535.85,776.19 L536.97,775.21 L538.09,775.05 L539.21,773.22 L540.33,772.54 L541.45,771.47 L542.58,770.87 L543.70,769.64 L544.82,768.48 L545.94,767.74 L547.06,766.68 L548.18,766.75 L549.31,765.63 L550.43,764.30 L551.55,763.07 L552.67,762.76 L553.79,761.17 L554.91,760.33 L556.03,760.25 L557.16,758.71 L558.28,758.14 L559.40,757.46 L560.52,756.42 L561.64,755.23 L562.76,754.50 L563.89,753.56 L565.01,752.85 L566.13,751.30 L567.25,750.49 L568.37,749.22 L569.49,748.31 L570.62,747.88 L571.74,745.98 L572.86,746.34 L573.98,744.81 L575.10,744.06 L576.22,742.93 L577.35,742.41 L578.47,740.44 L579.59,740.15 L580.71,739.69 L581.83,737.92 L582.95,737.72 L584.07,736.13 L585.20,735.49 L586.32,734.20 L587.44,732.71 L588.56,731.97 L589.68,731.59 L590.80,730.08 L591.93,729.38 L593.05,728.83 L594.17,728.21 L595.29,726.61 L596.41,725.71 L597.53,724.20 L598.66,723.24 L599.78,722.81 L600.90,722.23 L602.02,720.50 L603.14,720.84 L604.26,719.73 L605.39,718.13 L606.51,717.11 L607.63,716.84 L608.75,715.19 L609.87,713.87 L610.99,713.66 L612.11,712.63 L613.24,711.98 L614.36,710.93 L615.48,709.01 L616.60,708.91 L617.72,707.13 L618.84,706.24 L619.97,705.75 L621.09,705.28 L622.21,703.30 L623.33,703.04 L624.45,702.21 L625.57,701.40 L626.70,699.49 L627.82,699.25 L628.94,698.60 L630.06,697.37 L631.18,696.93 L632.30,695.26 L633.43,694.57 L634.55,693.84 L635.67,692.18 L636.79,691.17 L637.91,691.39 L639.03,689.69 L640.15,689.11 L641.28,687.21 L642.40,686.48 L643.52,686.30 L644.64,685.32 L645.76,684.53 L646.88,682.39 L648.01,682.44 L649.13,681.04 L650.25,680.28 L651.37,679.09 L652.49,678.19 L653.61,677.05 L654.74,676.99 L655.86,675.12 L656.98,674.83 L658.10,673.55 L659.22,672.89 L660.34,672.00 L661.47,670.71 L662.59,669.86 L663.71,669.06 L664.83,667.56 L665.95,666.84 L667.07,666.68 L668.19,665.43 L669.32,664.19 L670.44,662.58 L671.56,661.68 L672.68,661.22 L673.80,661.04 L674.92,659.00 L676.05,658.56 L677.17,657.40 L678.29,656.27 L679.41,655.43 L680.53,654.70 L681.65,653.14 L682.78,652.95 L683.90,652.00 L685.02,650.40 L686.14,650.39 L687.26,649.31 L688.38,647.60 L689.51,647.75 L690.63,645.71 L691.75,644.97 L692.87,644.40 L693.99,643.67 L695.11,642.02 L696.23,640.89 L697.36,641.05 L698.48,639.63 L699.60,638.58 L700.72,637.71 L701.84,637.01 L702.96,636.33 L704.09,634.76 L705.21,633.50 L706.33,633.62 L707.45,632.45 L708.57,630.66 L709.69,629.76 L710.82,629.00 L711.94,628.98 L713.06,627.04 L714.18,625.73 L715.30,624.76 L716.42,624.24 L717.55,624.24 L718.67,622.16 L719.79,622.11 L720.91,620.56 L722.03,619.18 L723.15,618.58 L724.27,618.47 L725.40,617.30 L726.52,615.46 L727.64,615.62 L728.76,614.01 L729.88,613.35 L731.00,612.77 L732.13,611.17 L733.25,611.06 L734.37,610.02 L735.49,608.69 L736.61,608.19 L737.73,607.27 L738.86,605.59 L739.98,604.41 L741.10,603.27 L742.22,603.40 L743.34,602.03 L744.46,601.26 L745.59,599.91 L746.71,599.13 L747.83,597.55 L748.95,597.42 L750.07,596.94 L751.19,595.08 L752.31,594.92 L753.44,593.30 L754.56,592.54 L755.68,591.02 L756.80,590.59 L757.92,589.55 L759.04,589.12 L760.17,587.77 L761.29,587.25 L762.41,585.60 L763.53,584.99 L764.65,584.60 L765.77,583.52 L766.90,582.38 L768.02,580.91 L769.14,580.77 L770.26,579.06 L771.38,578.20 L772.50,578.08 L773.63,576.30 L774.75,576.19 L775.87,575.20 L776.99,573.58 L778.11,573.15 L779.23,571.30 L780.35,570.93 L781.48,570.21 L782.60,568.60 L783.72,568.76 L784.84,566.82 L785.96,566.85 L787.08,565.77 L788.21,563.69 L789.33,563.14 L790.45,562.86 L791.57,562.08 L792.69,559.92 L793.81,559.43 L794.94,558.27 L796.06,558.32 L797.18,556.70 L798.30,556.15 L799.42,555.40 L800.54,554.33 L801.67,553.00 L802.79,552.46 L803.91,551.48 L805.03,550.92 L806.15,549.00 L807.27,548.34 L808.39,547.20 L809.52,546.82 L810.64,545.30 L811.76,544.86 L812.88,543.84 L814.00,542.96 L815.12,541.81 L816.25,541.40 L817.37,540.92 L818.49,540.10 L819.61,538.96 L820.73,538.29 L821.85,536.17 L822.98,535.86 L824.10,534.56 L825.22,534.75 L826.34,533.18 L827.46,531.69 L828.58,531.18 L829.71,530.57 L830.83,529.62 L831.95,529.26 L833.07,528.29 L834.19,527.40 L835.31,526.21 L836.43,525.31 L837.56,523.71 L838.68,523.88 L839.80,522.85 L840.92,521.94 L842.04,521.22 L843.16,520.16 L844.29,519.36 L845.41,518.13 L846.53,517.90 L847.65,515.75 L848.77,515.67 L849.89,513.98 L851.02,513.47 L852.14,512.61 L853.26,512.03 L854.38,510.48 L855.50,510.80 L856.62,509.14 L857.75,508.81 L858.87,507.39 L859.99,506.44 L861.11,506.39 L862.23,505.46 L863.35,504.85 L864.47,503.69 L865.60,503.04 L866.72,501.71 L867.84,500.02 L868.96,500.03 L870.08,499.24 L871.20,498.15 L872.33,497.55 L873.45,496.03 L874.57,495.19 L875.69,495.12 L876.81,494.14 L877.93,492.66 L879.06,491.40 L880.18,490.96 L881.30,490.40 L882.42,488.75 L883.54,489.27 L884.66,488.33 L885.79,486.43 L886.91,486.09 L888.03,485.75 L889.15,484.15 L890.27,482.65 L891.39,482.46 L892.51,481.83 L893.64,481.32 L894.76,480.48 L895.88,478.42 L897.00,478.14 L898.12,476.62 L899.24,477.01 L900.23,475.83 L900.65,642.35 L900.93,672.17 L901.21,689.26 L901.49,705.83 L901.77,719.25 L902.05,728.11 L902.33,735.41 L902.61,741.55 L902.89,746.67 L903.17,750.75 L903.45,753.36 L903.73,757.29 L904.01,760.05 L904.29,763.22 L904.57,766.05 L904.85,769.29 L905.13,771.69 L905.41,774.28 L905.69,776.01 L905.97,777.74 L906.25,780.09 L906.53,781.78 L906.82,784.20 L907.10,786.00 L907.38,786.89 L907.66,788.06 L907.94,788.83 L908.22,789.76 L908.50,790.20 L908.78,790.72 L909.06,791.11 L909.34,792.21 L909.62,792.55 L909.90,792.64 L910.18,793.64 L910.46,794.14 L910.74,794.34 L911.02,794.94 L911.30,794.66 L911.58,795.00 L911.86,795.88 L912.14,796.43 L912.42,796.85 L912.70,797.06 L912.98,797.57 L913.26,797.59 L913.54,797.79 L913.83,798.44 L914.11,798.94 L914.39,798.65 L914.67,799.58 L914.95,799.74 L915.23,799.95 L915.51,800.16 L915.79,800.71 L916.07,800.68 L916.35,801.05 L916.63,800.89 L916.91,801.34 L917.19,801.26 L918.31,802.44 L919.43,803.21 L920.55,804.21 L921.68,805.11 L922.80,805.48 L923.92,806.32 L925.04,806.68 L926.16,807.53 L927.28,808.16 L928.41,809.15 L929.53,809.19 L930.65,810.13 L931.77,810.89 L932.89,811.44 L934.01,811.83 L935.14,812.22 L936.26,812.29 L937.38,813.12 L938.50,813.79 L939.62,813.59 L940.74,814.25 L941.87,815.22 L942.99,815.66 L944.11,816.05 L945.23,816.29 L946.35,816.27 L947.47,816.63 L948.59,817.40 L949.72,818.21 L950.84,818.45 L951.96,818.94 L953.08,819.39 L954.20,820.10 L955.32,819.95 L956.45,820.10 L957.57,820.56 L958.69,821.52 L959.81,821.44 L960.93,822.10 L962.05,821.90 L963.18,822.44 L964.30,822.26 L965.42,822.67 L966.54,823.59 L967.66,823.66 L968.78,823.36 L969.91,824.05 L971.03,824.35 L972.15,824.61 L973.27,824.58 L974.39,824.70 L975.51,825.39 L976.63,825.27 L977.76,825.94 L978.88,826.72 L980.00,826.36 L981.12,827.06 L982.24,827.73 L983.36,827.18 L984.49,828.41 L985.61,828.23 L986.73,828.66 L987.85,828.62 L988.97,829.43 L990.09,829.94 L991.22,830.23 L992.34,830.65 L993.46,830.65 L994.58,831.20 L995.70,831.18 L996.82,832.02 L997.95,832.26 L999.07,832.71 L1000.19,832.36 L1001.31,832.85 L1002.43,833.19 L1003.55,833.76 L1004.67,834.32 L1005.80,834.91 L1006.92,834.59 L1008.04,835.26 L1009.16,836.03 L1010.28,836.24 L1011.40,836.64 L1012.53,836.38 L1013.65,836.53 L1014.77,837.53 L1015.89,837.27 L1017.01,838.04 L1018.13,838.00 L1019.26,838.14 L1020.38,838.67 L1021.50,838.79 L1022.62,839.48 L1023.74,840.12 L1024.86,839.91 L1025.99,840.11 L1027.11,840.76 L1028.23,840.82 L1029.35,841.13 L1030.47,841.65 L1031.59,841.62 L1032.71,841.80 L1033.84,841.94 L1034.96,841.96 L1036.08,842.49 L1037.20,842.16 L1038.32,842.55 L1039.44,842.68 L1040.57,843.13 L1041.69,843.37 L1042.81,843.72 L1043.93,843.69 L1045.05,844.33 L1046.17,844.33 L1047.30,844.46 L1048.42,844.83 L1049.54,845.27 L1050.66,845.68 L1051.78,845.88 L1052.90,845.83 L1054.03,845.82 L1055.15,845.85 L1056.27,846.10 L1057.39,846.69 L1058.51,846.29 L1059.63,847.12 L1060.75,846.89 L1061.88,847.70 L1063.00,847.25 L1064.12,847.52 L1065.24,847.43 L1066.36,847.68 L1067.48,848.07 L1068.61,848.11 L1069.73,848.39 L1070.85,848.70 L1071.97,849.26 L1073.09,849.15 L1074.21,848.96 L1075.34,849.77 L1076.46,849.24 L1077.58,849.83 L1078.70,850.15 L1079.82,850.69 L1080.94,850.49 L1082.07,850.86 L1083.19,850.58 L1084.31,850.51 L1085.43,850.67 L1086.55,851.11 L1087.67,851.49 L1088.79,851.92 L1089.92,851.53 L1091.04,851.82 L1092.16,851.82 L1093.28,852.30 L1094.40,851.97 L1095.52,852.77 L1096.65,852.83 L1097.77,853.02 L1098.89,852.84 L1100.01,852.72 L1101.13,853.57 L1102.25,853.27 L1103.38,853.29 L1104.50,853.96 L1105.62,854.26 L1106.74,853.92 L1107.86,853.82 L1108.98,853.91 L1110.11,854.20 L1111.23,854.64 L1112.35,854.77 L1113.47,854.81 L1114.59,854.59 L1115.71,855.30 L1116.83,855.46 L1117.96,855.29 L1119.08,855.08 L1120.20,855.96 L1121.32,856.24 L1122.44,856.29 L1123.56,855.99 L1124.69,856.09 L1125.81,856.62 L1126.93,856.74 L1128.05,856.48 L1129.17,856.56 L1130.29,856.64 L1131.42,856.73 L1132.54,857.50 L1133.66,857.22 L1134.78,857.00 L1135.90,857.01 L1137.02,857.74 L1138.15,857.35 L1139.27,857.67 L1140.39,857.52 L1141.51,858.30 L1142.63,857.97 L1143.75,857.95 L1144.87,858.42 L1146.00,858.89 L1147.12,858.92 L1148.24,859.06 L1149.36,859.24 L1150.48,859.29 L1151.60,858.96 L1152.73,859.56 L1153.85,859.04 L1154.97,859.17 L1156.09,859.20 L1157.21,859.32 L1158.33,859.51 L1159.46,859.42 L1160.58,859.49 L1161.70,859.91 L1162.82,859.69 L1163.94,860.62 L1165.06,860.72 L1166.19,860.86 L1167.31,860.82 L1168.43,860.76 L1169.55,860.78 L1170.67,860.66 L1171.79,860.70 L1172.91,861.42 L1174.04,861.21 L1175.16,861.17 L1176.28,861.43 L1177.40,861.76 L1178.52,861.40 L1179.64,861.70 L1180.77,861.49 L1181.89,861.76 L1183.01,861.40 L1184.13,861.50 L1185.25,862.42 L1186.37,861.85 L1187.50,861.97 L1188.62,862.46 L1189.74,862.72 L1190.86,862.45 L1191.98,862.66 L1193.10,862.37 L1194.23,862.28 L1195.35,862.87 L1196.47,863.04 L1197.59,862.92 L1198.71,862.81 L1199.83,862.80 L1200.95,863.08 L1202.08,863.43 L1203.20,863.47 L1204.32,863.05 L1205.44,863.45 L1206.56,863.97 L1207.68,863.69 L1208.81,863.94 L1209.93,863.61 L1211.05,864.25 L1212.17,864.14 L1213.29,864.38 L1214.41,864.09 L1215.54,863.69 L1216.66,864.19 L1217.78,864.41 L1218.90,863.96 L1220.02,864.84 L1221.14,864.67 L1222.27,864.31 L1223.39,865.15 L1224.51,864.50 L1225.63,864.97 L1226.75,865.37 L1227.87,865.22 L1228.99,865.10 L1230.12,865.25 L1231.24,865.20 L1232.36,865.72 L1233.48,865.64 L1234.60,865.00 L1235.72,865.59 L1236.85,865.64 L1237.97,866.09 L1239.09,865.99" stroke="#3a73ad" stroke-width="2"/>
</g>
</svg>
<div class="t" style="left:312.40px;top:882.67px;font-size:12.5px;color:#3d4550;transform:scaleX(0.9494);">0</div>
<div class="t" style="left:312.40px;top:852.67px;font-size:12.5px;color:#3d4550;transform:scaleX(0.9494);">5</div>
<div class="t" style="left:306.00px;top:822.67px;font-size:12.5px;color:#3d4550;transform:scaleX(0.9350);">10</div>
<div class="t" style="left:306.00px;top:793.67px;font-size:12.5px;color:#3d4550;transform:scaleX(0.9350);">15</div>
<div class="t" style="left:306.00px;top:763.67px;font-size:12.5px;color:#3d4550;transform:scaleX(0.9350);">20</div>
<div class="t" style="left:306.00px;top:733.67px;font-size:12.5px;color:#3d4550;transform:scaleX(0.9350);">25</div>
<div class="t" style="left:306.00px;top:703.67px;font-size:12.5px;color:#3d4550;transform:scaleX(0.9350);">30</div>
<div class="t" style="left:306.00px;top:673.67px;font-size:12.5px;color:#3d4550;transform:scaleX(0.9350);">35</div>
<div class="t" style="left:306.00px;top:643.67px;font-size:12.5px;color:#3d4550;transform:scaleX(0.9350);">40</div>
<div class="t" style="left:306.00px;top:614.67px;font-size:12.5px;color:#3d4550;transform:scaleX(0.9350);">45</div>
<div class="t" style="left:306.00px;top:584.67px;font-size:12.5px;color:#3d4550;transform:scaleX(0.9350);">50</div>
<div class="t" style="left:306.00px;top:554.67px;font-size:12.5px;color:#3d4550;transform:scaleX(0.9350);">55</div>
<div class="t" style="left:306.00px;top:524.67px;font-size:12.5px;color:#3d4550;transform:scaleX(0.9350);">60</div>
<div class="t" style="left:306.00px;top:494.67px;font-size:12.5px;color:#3d4550;transform:scaleX(0.9350);">65</div>
<div class="t" style="left:306.00px;top:464.67px;font-size:12.5px;color:#3d4550;transform:scaleX(0.9350);">70</div>
<div class="t" style="left:306.00px;top:435.67px;font-size:12.5px;color:#3d4550;transform:scaleX(0.9350);">75</div>
<div class="t" style="left:306.00px;top:405.67px;font-size:12.5px;color:#3d4550;transform:scaleX(0.9350);">80</div>
<div class="t" style="left:306.00px;top:375.67px;font-size:12.5px;color:#3d4550;transform:scaleX(0.9350);">85</div>
<div class="t" style="left:306.00px;top:345.67px;font-size:12.5px;color:#3d4550;transform:scaleX(0.9350);">90</div>
<div class="t" style="left:306.00px;top:315.67px;font-size:12.5px;color:#3d4550;transform:scaleX(0.9350);">95</div>
<div class="t" style="left:298.50px;top:285.67px;font-size:12.5px;color:#3d4550;transform:scaleX(0.9829);">100</div>
<div class="t" style="left:298.50px;top:256.67px;font-size:12.5px;color:#3d4550;transform:scaleX(0.9829);">105</div>
<div class="t" style="left:298.50px;top:226.67px;font-size:12.5px;color:#3d4550;transform:scaleX(1.0287);">110</div>
<div class="t" style="left:298.50px;top:196.67px;font-size:12.5px;color:#3d4550;transform:scaleX(1.0287);">115</div>
<div class="t" style="left:298.50px;top:166.67px;font-size:12.5px;color:#3d4550;transform:scaleX(0.9829);">120</div>
<div class="t" style="left:1256.20px;top:882.67px;font-size:12.5px;color:#3d4550;transform:scaleX(0.9494);">0</div>
<div class="t" style="left:1256.20px;top:858.67px;font-size:12.5px;color:#3d4550;transform:scaleX(0.9781);">10</div>
<div class="t" style="left:1256.20px;top:834.67px;font-size:12.5px;color:#3d4550;transform:scaleX(0.9781);">20</div>
<div class="t" style="left:1256.20px;top:810.67px;font-size:12.5px;color:#3d4550;transform:scaleX(0.9781);">30</div>
<div class="t" style="left:1256.20px;top:787.67px;font-size:12.5px;color:#3d4550;transform:scaleX(0.9781);">40</div>
<div class="t" style="left:1256.20px;top:763.67px;font-size:12.5px;color:#3d4550;transform:scaleX(0.9781);">50</div>
<div class="t" style="left:1256.20px;top:739.67px;font-size:12.5px;color:#3d4550;transform:scaleX(0.9781);">60</div>
<div class="t" style="left:1256.20px;top:715.67px;font-size:12.5px;color:#3d4550;transform:scaleX(0.9781);">70</div>
<div class="t" style="left:1256.20px;top:691.67px;font-size:12.5px;color:#3d4550;transform:scaleX(0.9781);">80</div>
<div class="t" style="left:1256.20px;top:667.67px;font-size:12.5px;color:#3d4550;transform:scaleX(0.9781);">90</div>
<div class="t" style="left:1256.20px;top:643.67px;font-size:12.5px;color:#3d4550;">100</div>
<div class="t" style="left:1256.20px;top:619.67px;font-size:12.5px;color:#3d4550;transform:scaleX(1.0438);">110</div>
<div class="t" style="left:1256.20px;top:596.67px;font-size:12.5px;color:#3d4550;">120</div>
<div class="t" style="left:1256.20px;top:572.67px;font-size:12.5px;color:#3d4550;">130</div>
<div class="t" style="left:1256.20px;top:548.67px;font-size:12.5px;color:#3d4550;">140</div>
<div class="t" style="left:1256.20px;top:524.67px;font-size:12.5px;color:#3d4550;">150</div>
<div class="t" style="left:1256.20px;top:500.67px;font-size:12.5px;color:#3d4550;">160</div>
<div class="t" style="left:1256.20px;top:476.67px;font-size:12.5px;color:#3d4550;">170</div>
<div class="t" style="left:1256.20px;top:452.67px;font-size:12.5px;color:#3d4550;">180</div>
<div class="t" style="left:1256.20px;top:429.67px;font-size:12.5px;color:#3d4550;">190</div>
<div class="t" style="left:1256.20px;top:405.67px;font-size:12.5px;color:#3d4550;">200</div>
<div class="t" style="left:1256.20px;top:381.67px;font-size:12.5px;color:#3d4550;">210</div>
<div class="t" style="left:1256.20px;top:357.67px;font-size:12.5px;color:#3d4550;">220</div>
<div class="t" style="left:1256.20px;top:333.67px;font-size:12.5px;color:#3d4550;">230</div>
<div class="t" style="left:1256.20px;top:309.67px;font-size:12.5px;color:#3d4550;">240</div>
<div class="t" style="left:1256.20px;top:285.67px;font-size:12.5px;color:#3d4550;">250</div>
<div class="t" style="left:1256.20px;top:261.67px;font-size:12.5px;color:#3d4550;">260</div>
<div class="t" style="left:1256.20px;top:238.67px;font-size:12.5px;color:#3d4550;">270</div>
<div class="t" style="left:1256.20px;top:214.67px;font-size:12.5px;color:#3d4550;">280</div>
<div class="t" style="left:1256.20px;top:190.67px;font-size:12.5px;color:#3d4550;">290</div>
<div class="t" style="left:1256.20px;top:166.67px;font-size:12.5px;color:#3d4550;">300</div>
<div class="t" style="left:325.05px;top:898.67px;font-size:12.5px;color:#3d4550;transform:scaleX(0.9494);">0</div>
<div class="t" style="left:395.15px;top:898.67px;font-size:12.5px;color:#3d4550;transform:scaleX(0.9494);">5</div>
<div class="t" style="left:461.95px;top:898.67px;font-size:12.5px;color:#3d4550;transform:scaleX(0.9494);">10</div>
<div class="t" style="left:532.05px;top:898.67px;font-size:12.5px;color:#3d4550;transform:scaleX(0.9494);">15</div>
<div class="t" style="left:602.15px;top:898.67px;font-size:12.5px;color:#3d4550;transform:scaleX(0.9494);">20</div>
<div class="t" style="left:672.25px;top:898.67px;font-size:12.5px;color:#3d4550;transform:scaleX(0.9494);">25</div>
<div class="t" style="left:742.35px;top:898.67px;font-size:12.5px;color:#3d4550;transform:scaleX(0.9494);">30</div>
<div class="t" style="left:812.45px;top:898.67px;font-size:12.5px;color:#3d4550;transform:scaleX(0.9494);">35</div>
<div class="t" style="left:882.55px;top:898.67px;font-size:12.5px;color:#3d4550;transform:scaleX(0.9494);">40</div>
<div class="t" style="left:952.65px;top:898.67px;font-size:12.5px;color:#3d4550;transform:scaleX(0.9494);">45</div>
<div class="t" style="left:1022.75px;top:898.67px;font-size:12.5px;color:#3d4550;transform:scaleX(0.9494);">50</div>
<div class="t" style="left:1092.85px;top:898.67px;font-size:12.5px;color:#3d4550;transform:scaleX(0.9494);">55</div>
<div class="t" style="left:1162.95px;top:898.67px;font-size:12.5px;color:#3d4550;transform:scaleX(0.9494);">60</div>
<div class="t" style="left:1233.05px;top:898.67px;font-size:12.5px;color:#3d4550;transform:scaleX(0.9494);">65</div>
<div class="t" style="left:758.25px;top:918.58px;font-size:14.5px;color:#3d4550;transform:scaleX(0.9910);">Zeit (s)</div>
<div class="t" style="left:247.10px;top:523.90px;width:75.01px;font-size:15px;color:#3d4550;transform-origin:50% 0;transform:rotate(-90deg) scaleX(0.9599);text-align:center;">Druck (bar)</div>
<div class="t" style="left:1161.20px;top:521.50px;width:260.20px;font-size:16px;color:#333;transform-origin:50% 0;transform:rotate(90deg) scaleX(0.9320);text-align:center;"><span style="color:#44b03c">Weg DÜ (mm)</span><span style="color:#555"> / </span><span style="color:#eda531">Länge Prüfling (mm)</span></div>
<div class="a" style="left:368px;top:167px;width:167px;height:108px;background:#fff;border:1px solid #aaaaaa;box-sizing:border-box;"></div>
<div class="t" style="left:408.20px;top:183.10px;font-size:13px;color:#3d4550;transform:scaleX(0.9688);">S03 Prüfdruck</div>
<div class="t" style="left:408.20px;top:208.10px;font-size:13px;color:#3d4550;transform:scaleX(0.9605);">S04 Druck DÜ</div>
<div class="t" style="left:414.00px;top:233.10px;font-size:13px;color:#3d4550;transform:scaleX(0.9785);">S15 Weg DÜ</div>
<div class="t" style="left:380.00px;top:258.10px;font-size:13px;color:#3d4550;transform:scaleX(0.9766);">S22 Länge Prüfling</div>
<svg class="a" style="left:0;top:0" width="1869" height="1066" viewBox="0 0 1869 1066"><g fill="none" stroke-width="1.3"><path d="M502.1,188.7 L512.5,176.3 L522.3,188.5 L526.8,184.0" stroke="#3a73ad"/><path d="M502.1,213.7 L512.5,201.3 L522.3,213.5 L526.8,209.0" stroke="#c4434d"/><path d="M502.1,238.7 L512.5,226.3 L522.3,238.5 L526.8,234.0" stroke="#58b256"/><path d="M502.1,263.7 L512.5,251.3 L522.3,263.5 L526.8,259.0" stroke="#eaa340"/></g></svg>
<div class="t" style="left:1376.30px;top:120.90px;font-size:13px;color:#000;">Längenänderung</div>
<div class="a" style="left:1364px;top:132px;width:12px;height:286px;background:#f0f0f0;border:1px solid #a8a8a8;box-sizing:border-box;border-radius:5px"></div>
<div class="a" style="left:1375px;top:131px;width:480px;height:288px;background:#fff;border:1px solid #a0a0a0;box-sizing:border-box;"></div>
<div class="t" style="left:1389.30px;top:154.90px;font-size:13px;color:#000;transform:scaleX(0.9919);">Schrittkette Längenänderung</div>
<div class="a" style="left:1388px;top:164px;width:455px;height:27px;background:#fff;border:1px solid #a8a8a8;box-sizing:border-box;"></div>
<div class="t" style="left:1394.00px;top:178.50px;font-size:13px;color:#000;">0 - Warten auf Start</div>
<div class="t" style="left:1389.00px;top:206.00px;font-size:13px;color:#000;">Länge Start</div>
<div class="a" style="left:1387px;top:215px;width:72px;height:27px;background:#e6e6e6;border:1px solid #a8a8a8;box-sizing:border-box;"></div>
<div class="t" style="left:1410.35px;top:229.50px;font-size:13px;color:#000;">0,00</div>
<div class="t" style="left:1460.00px;top:233.20px;font-size:13px;color:#000;">mm</div>
<div class="t" style="left:1556.00px;top:206.00px;font-size:13px;color:#000;">Länge Zieldruck</div>
<div class="a" style="left:1555px;top:215px;width:72px;height:27px;background:#e6e6e6;border:1px solid #a8a8a8;box-sizing:border-box;"></div>
<div class="t" style="left:1578.35px;top:229.50px;font-size:13px;color:#000;">0,00</div>
<div class="t" style="left:1628.00px;top:233.20px;font-size:13px;color:#000;">mm</div>
<div class="t" style="left:1736.00px;top:202.50px;font-size:13px;color:#000;">Längenänderung</div>
<div class="a" style="left:1735px;top:212px;width:72px;height:27px;background:#e6e6e6;border:1px solid #a8a8a8;box-sizing:border-box;"></div>
<div class="t" style="left:1758.35px;top:226.50px;font-size:13px;color:#000;">0,00</div>
<div class="t" style="left:1808.00px;top:230.79px;font-size:11px;color:#000;">%</div>
<div class="t" style="left:1389.00px;top:263.20px;font-size:13px;color:#000;">Ø A 1 (mm)</div>
<div class="t" style="left:1461.00px;top:263.20px;font-size:13px;color:#000;">Ø A 2 (mm)</div>
<div class="a" style="left:1387px;top:272px;width:72px;height:27px;background:#e6e6e6;border:1px solid #a8a8a8;box-sizing:border-box;"></div>
<div class="t" style="left:1410.35px;top:286.50px;font-size:13px;color:#000;">0,00</div>
<div class="a" style="left:1459px;top:272px;width:72px;height:27px;background:#e6e6e6;border:1px solid #a8a8a8;box-sizing:border-box;"></div>
<div class="t" style="left:1482.35px;top:286.50px;font-size:13px;color:#000;">0,00</div>
<div class="t" style="left:1556.00px;top:266.20px;font-size:13px;color:#000;">Ø A 1 (mm)</div>
<div class="t" style="left:1628.00px;top:266.20px;font-size:13px;color:#000;">Ø A 2 (mm)</div>
<div class="a" style="left:1555px;top:275px;width:72px;height:27px;background:#e6e6e6;border:1px solid #a8a8a8;box-sizing:border-box;"></div>
<div class="t" style="left:1578.35px;top:289.50px;font-size:13px;color:#000;">0,00</div>
<div class="a" style="left:1627px;top:275px;width:72px;height:27px;background:#e6e6e6;border:1px solid #a8a8a8;box-sizing:border-box;"></div>
<div class="t" style="left:1650.35px;top:289.50px;font-size:13px;color:#000;">0,00</div>
<div class="t" style="left:1389.00px;top:311.20px;font-size:13px;color:#000;">Ø B 1 (mm)</div>
<div class="t" style="left:1461.00px;top:311.20px;font-size:13px;color:#000;">Ø B 2 (mm)</div>
<div class="a" style="left:1387px;top:320px;width:72px;height:27px;background:#e6e6e6;border:1px solid #a8a8a8;box-sizing:border-box;"></div>
<div class="t" style="left:1410.35px;top:334.50px;font-size:13px;color:#000;">0,00</div>
<div class="a" style="left:1459px;top:320px;width:72px;height:27px;background:#e6e6e6;border:1px solid #a8a8a8;box-sizing:border-box;"></div>
<div class="t" style="left:1482.35px;top:334.50px;font-size:13px;color:#000;">0,00</div>
<div class="t" style="left:1556.00px;top:314.20px;font-size:13px;color:#000;">Ø B 1 (mm)</div>
<div class="t" style="left:1628.00px;top:314.20px;font-size:13px;color:#000;">Ø B 2 (mm)</div>
<div class="a" style="left:1555px;top:323px;width:72px;height:27px;background:#e6e6e6;border:1px solid #a8a8a8;box-sizing:border-box;"></div>
<div class="t" style="left:1578.35px;top:337.50px;font-size:13px;color:#000;">0,00</div>
<div class="a" style="left:1627px;top:323px;width:72px;height:27px;background:#e6e6e6;border:1px solid #a8a8a8;box-sizing:border-box;"></div>
<div class="t" style="left:1650.35px;top:337.50px;font-size:13px;color:#000;">0,00</div>
<div class="t" style="left:1389.00px;top:359.20px;font-size:13px;color:#000;">Ø C 1 (mm)</div>
<div class="t" style="left:1461.00px;top:359.20px;font-size:13px;color:#000;">Ø C 2 (mm)</div>
<div class="a" style="left:1387px;top:368px;width:72px;height:27px;background:#e6e6e6;border:1px solid #a8a8a8;box-sizing:border-box;"></div>
<div class="t" style="left:1410.35px;top:382.50px;font-size:13px;color:#000;">0,00</div>
<div class="a" style="left:1459px;top:368px;width:72px;height:27px;background:#e6e6e6;border:1px solid #a8a8a8;box-sizing:border-box;"></div>
<div class="t" style="left:1482.35px;top:382.50px;font-size:13px;color:#000;">0,00</div>
<div class="t" style="left:1556.00px;top:362.20px;font-size:13px;color:#000;">Ø C 1 (mm)</div>
<div class="t" style="left:1628.00px;top:362.20px;font-size:13px;color:#000;">Ø C 2 (mm)</div>
<div class="a" style="left:1555px;top:371px;width:72px;height:27px;background:#e6e6e6;border:1px solid #a8a8a8;box-sizing:border-box;"></div>
<div class="t" style="left:1578.35px;top:385.50px;font-size:13px;color:#000;">0,00</div>
<div class="a" style="left:1627px;top:371px;width:72px;height:27px;background:#e6e6e6;border:1px solid #a8a8a8;box-sizing:border-box;"></div>
<div class="t" style="left:1650.35px;top:385.50px;font-size:13px;color:#000;">0,00</div>
<div class="t" style="left:1736.00px;top:314.00px;font-size:13px;color:#000;transform:scaleX(0.8928);">Durchmesseränd.</div>
<div class="a" style="left:1735px;top:323px;width:72px;height:27px;background:#e6e6e6;border:1px solid #a8a8a8;box-sizing:border-box;"></div>
<div class="t" style="left:1758.35px;top:337.50px;font-size:13px;color:#000;">0,00</div>
<div class="t" style="left:1808.00px;top:342.19px;font-size:11px;color:#000;">%</div>
<div class="t" style="left:1736.00px;top:361.50px;font-size:13px;color:#000;">Bewertung LM</div>
<div class="a" style="left:1736px;top:372px;width:107px;height:23px;background:#bababa;border-radius:4px;"></div>
<div class="t" style="left:1376.30px;top:432.50px;font-size:13px;color:#000;">Torsion</div>
<div class="a" style="left:1364px;top:444px;width:12px;height:130px;background:#f0f0f0;border:1px solid #a8a8a8;box-sizing:border-box;border-radius:5px"></div>
<div class="a" style="left:1375px;top:443px;width:480px;height:132px;background:#fff;border:1px solid #a0a0a0;box-sizing:border-box;"></div>
<div class="t" style="left:1389.40px;top:457.00px;font-size:13px;color:#000;">Schrittkette Torsion</div>
<div class="a" style="left:1388px;top:467px;width:455px;height:27px;background:#fff;border:1px solid #a8a8a8;box-sizing:border-box;"></div>
<div class="t" style="left:1394.00px;top:481.50px;font-size:13px;color:#000;">0 - Warten auf Start</div>
<div class="t" style="left:1389.00px;top:529.50px;font-size:13px;color:#000;">Startwinkel</div>
<div class="a" style="left:1387px;top:539px;width:72px;height:27px;background:#e6e6e6;border:1px solid #a8a8a8;box-sizing:border-box;"></div>
<div class="t" style="left:1419.38px;top:553.50px;font-size:13px;color:#000;">0</div>
<div class="t" style="left:1461.00px;top:547.19px;font-size:11px;color:#000;">°</div>
<div class="t" style="left:1516.00px;top:529.50px;font-size:13px;color:#000;">Endwinkel</div>
<div class="a" style="left:1515px;top:539px;width:72px;height:27px;background:#e6e6e6;border:1px solid #a8a8a8;box-sizing:border-box;"></div>
<div class="t" style="left:1547.38px;top:553.50px;font-size:13px;color:#000;">0</div>
<div class="t" style="left:1589.00px;top:547.19px;font-size:11px;color:#000;">°</div>
<div class="t" style="left:1640.00px;top:529.50px;font-size:13px;color:#000;">Torsion / m</div>
<div class="a" style="left:1639px;top:539px;width:72px;height:27px;background:#e6e6e6;border:1px solid #a8a8a8;box-sizing:border-box;"></div>
<div class="t" style="left:1665.96px;top:553.50px;font-size:13px;color:#000;">0,0</div>
<div class="t" style="left:1713.00px;top:547.19px;font-size:11px;color:#000;">°</div>
<div class="t" style="left:1736.40px;top:529.50px;font-size:13px;color:#000;">Bewertung Torsion</div>
<div class="a" style="left:1736px;top:540px;width:107px;height:23px;background:#bababa;border-radius:4px;"></div>
<div class="t" style="left:1376.30px;top:588.80px;font-size:13px;color:#000;">Zeitstand / Dichtheitsprüfung</div>
<div class="a" style="left:1364px;top:601px;width:12px;height:165px;background:#f0f0f0;border:1px solid #a8a8a8;box-sizing:border-box;border-radius:5px"></div>
<div class="a" style="left:1375px;top:600px;width:480px;height:167px;background:#fff;border:1px solid #a0a0a0;box-sizing:border-box;"></div>
<div class="t" style="left:1389.00px;top:613.00px;font-size:13px;color:#000;">Schrittkette Zeitstand</div>
<div class="a" style="left:1388px;top:623px;width:455px;height:27px;background:#fff;border:1px solid #a8a8a8;box-sizing:border-box;"></div>
<div class="t" style="left:1394.00px;top:637.50px;font-size:13px;color:#000;">0 - Warten auf Start</div>
<div class="t" style="left:1389.00px;top:673.50px;font-size:13px;color:#000;">Startdruck</div>
<div class="a" style="left:1387px;top:683px;width:72px;height:27px;background:#e6e6e6;border:1px solid #a8a8a8;box-sizing:border-box;"></div>
<div class="t" style="left:1413.96px;top:697.50px;font-size:13px;color:#000;">0,0</div>
<div class="t" style="left:1461.00px;top:698.50px;font-size:13px;color:#000;">bar</div>
<div class="t" style="left:1389.00px;top:721.50px;font-size:13px;color:#000;">Druckabfall</div>
<div class="a" style="left:1387px;top:731px;width:72px;height:27px;background:#e6e6e6;border:1px solid #a8a8a8;box-sizing:border-box;"></div>
<div class="t" style="left:1413.96px;top:745.50px;font-size:13px;color:#000;">0,0</div>
<div class="t" style="left:1461.00px;top:746.50px;font-size:13px;color:#000;">bar</div>
<div class="a" style="left:1484px;top:732px;width:23px;height:23px;background:#bababa;border-radius:4px;"></div>
<div class="t" style="left:1556.00px;top:670.50px;font-size:13px;color:#000;">Startdruck</div>
<div class="a" style="left:1555px;top:680px;width:72px;height:27px;background:#e6e6e6;border:1px solid #a8a8a8;box-sizing:border-box;"></div>
<div class="t" style="left:1581.96px;top:694.50px;font-size:13px;color:#000;">0,0</div>
<div class="t" style="left:1629.00px;top:693.50px;font-size:13px;color:#000;">bar</div>
<div class="t" style="left:1556.00px;top:718.50px;font-size:13px;color:#000;">Druckabfall</div>
<div class="a" style="left:1555px;top:728px;width:72px;height:27px;background:#e6e6e6;border:1px solid #a8a8a8;box-sizing:border-box;"></div>
<div class="t" style="left:1581.96px;top:742.50px;font-size:13px;color:#000;">0,0</div>
<div class="t" style="left:1629.00px;top:741.50px;font-size:13px;color:#000;">bar</div>
<div class="a" style="left:1652px;top:732px;width:23px;height:23px;background:#bababa;border-radius:4px;"></div>
<div class="t" style="left:1736.00px;top:721.50px;font-size:13px;color:#000;transform:scaleX(0.9742);">Bewertung Gesamt</div>
<div class="a" style="left:1736px;top:732px;width:107px;height:23px;background:#bababa;border-radius:4px;"></div>
<div class="t" style="left:1376.30px;top:781.00px;font-size:13px;color:#000;">Berstprüfung</div>
<div class="a" style="left:1364px;top:791px;width:14px;height:120px;background:#013a7b;border-radius:5px 0 0 5px"></div>
<div class="a" style="left:1375px;top:791px;width:480px;height:120px;background:#fff;border:1px solid #a0a0a0;box-sizing:border-box;"></div>
<div class="t" style="left:1389.00px;top:814.50px;font-size:13px;color:#000;">Schrittkette Berstprüfung</div>
<div class="a" style="left:1388px;top:824px;width:455px;height:27px;background:#fff;border:1px solid #a8a8a8;box-sizing:border-box;"></div>
<div class="t" style="left:1394.00px;top:838.50px;font-size:13px;color:#000;">14 - Druck herunterfahren</div>
<div class="t" style="left:1389.00px;top:862.50px;font-size:13px;color:#000;">Maxdruck</div>
<div class="a" style="left:1387px;top:872px;width:72px;height:27px;background:#e6e6e6;border:1px solid #a8a8a8;box-sizing:border-box;"></div>
<div class="t" style="left:1410.35px;top:886.50px;font-size:13px;color:#000;">68,0</div>
<div class="t" style="left:1460.00px;top:887.50px;font-size:13px;color:#000;">bar</div>
<div class="t" style="left:1520.00px;top:865.50px;font-size:13px;color:#000;">Bersten erkannt</div>
<div class="a" style="left:1520px;top:876px;width:107px;height:23px;background:#66ff00;border-radius:4px"></div>
<div class="t" style="left:1736.00px;top:865.50px;font-size:13px;color:#000;">Bewertung</div>
<div class="a" style="left:1736px;top:876px;width:107px;height:23px;background:#bababa;border-radius:4px;"></div>
<div class="a" style="left:7px;top:959px;width:1860px;height:96px;background:#fff;border:1px solid #7a7a7a;box-sizing:border-box;"></div>
<div class="a" style="left:20px;top:972px;width:23px;height:71px;background:#f0f0f0;border:1px solid #a0a0a0;box-sizing:border-box;border-radius:4px;"></div>
<div class="a" style="left:56px;top:996.4px;width:23px;height:11px;background:#33a033;border:1px solid #1d641d;box-sizing:border-box;border-radius:5px"></div>
<div class="t" style="left:81.30px;top:1002.84px;font-size:12px;color:#000;">NI-Box</div>
<div class="a" style="left:56px;top:1008.5px;width:23px;height:11px;background:#33a033;border:1px solid #1d641d;box-sizing:border-box;border-radius:5px"></div>
<div class="t" style="left:81.30px;top:1015.84px;font-size:12px;color:#000;transform:scaleX(0.9059);">SPS senden Rezept</div>
<div class="a" style="left:56px;top:1020.6px;width:23px;height:11px;background:#33a033;border:1px solid #1d641d;box-sizing:border-box;border-radius:5px"></div>
<div class="t" style="left:81.30px;top:1027.84px;font-size:12px;color:#000;transform:scaleX(0.8948);">SPS senden</div>
<div class="a" style="left:56px;top:1032.7px;width:23px;height:11px;background:#33a033;border:1px solid #1d641d;box-sizing:border-box;border-radius:5px"></div>
<div class="t" style="left:81.30px;top:1039.84px;font-size:12px;color:#000;transform:scaleX(0.9417);">SPS empfangen</div>
<div class="t" style="left:246.30px;top:970.50px;font-size:13px;color:#000;transform:scaleX(0.8758);">FDR</div>
<div class="a" style="left:237.5px;top:980.5px;width:42px;height:65px;background:#fff;border:1px solid #a8a8a8;box-sizing:border-box;border-radius:4px;"></div>
<div class="a" style="left:240px;top:1042px;width:37px;height:1px;background:#9ccbf3;"></div>
<div class="t" style="left:207.30px;top:983.34px;font-size:12px;color:#222;transform:scaleX(0.9140);">100</div>
<div class="a" style="left:228px;top:983px;width:4px;height:1px;background:#222;"></div>
<div class="t" style="left:214.00px;top:1013.34px;font-size:12px;color:#222;transform:scaleX(0.8691);">50</div>
<div class="a" style="left:228px;top:1013px;width:4px;height:1px;background:#222;"></div>
<div class="t" style="left:219.60px;top:1042.34px;font-size:12px;color:#222;transform:scaleX(0.8990);">0</div>
<div class="a" style="left:228px;top:1042px;width:4px;height:1px;background:#222;"></div>
<div class="t" style="left:392.05px;top:981.90px;font-size:13px;color:#000;transform:scaleX(0.9214);">DÜ</div>
<div class="a" style="left:304.5px;top:992px;width:186px;height:27px;background:#d3d3d3;border:1px solid #c8c8c8;box-sizing:border-box;border-radius:3px;overflow:hidden"><div style="position:absolute;left:90px;top:0;width:96px;height:27px;background:#99ccff"></div></div>
<div class="a" style="left:307.0px;top:1021px;width:1.2px;height:6px;background:#222;"></div>
<div class="t" style="left:297.49px;top:1033.84px;font-size:12px;color:#222;">100</div>
<div class="a" style="left:351.8px;top:1021px;width:1.2px;height:6px;background:#222;"></div>
<div class="t" style="left:345.63px;top:1033.84px;font-size:12px;color:#222;">75</div>
<div class="a" style="left:395.5px;top:1021px;width:1.2px;height:6px;background:#222;"></div>
<div class="t" style="left:389.33px;top:1033.84px;font-size:12px;color:#222;">50</div>
<div class="a" style="left:440.7px;top:1021px;width:1.2px;height:6px;background:#222;"></div>
<div class="t" style="left:434.53px;top:1033.84px;font-size:12px;color:#222;">25</div>
<div class="a" style="left:484.8px;top:1021px;width:1.2px;height:6px;background:#222;"></div>
<div class="t" style="left:481.96px;top:1033.84px;font-size:12px;color:#222;">0</div>
<div class="t" style="left:506.00px;top:998.00px;font-size:13px;color:#000;transform:scaleX(1.0065);">Schrittkette Vorfüllen</div>
<div class="a" style="left:629px;top:983px;width:455px;height:27px;background:#fff;border:1px solid #a8a8a8;box-sizing:border-box;"></div>
<div class="t" style="left:635.00px;top:997.50px;font-size:13px;color:#000;">0 - Warten auf Start</div>
<div class="t" style="left:521.00px;top:1030.50px;font-size:13px;color:#000;">Schrittkette Ablauf</div>
<div class="a" style="left:629px;top:1016px;width:455px;height:27px;background:#fff;border:1px solid #a8a8a8;box-sizing:border-box;"></div>
<div class="t" style="left:635.00px;top:1030.50px;font-size:13px;color:#000;">5 - weiter wenn 1.Prüfung beendet</div>
<div class="t" style="left:1111.30px;top:972.54px;font-size:12px;color:#000;">Benutzer Level</div>
<div class="a" style="left:1110px;top:983px;width:228px;height:30px;background:#fff;border:1px solid #a8a8a8;box-sizing:border-box;"></div>
<div class="t" style="left:1116.00px;top:997.50px;font-size:13px;color:#000;">Verfahrenstechniker</div>
<div class="a" style="left:1110px;top:1016px;width:228px;height:27px;background:#e6e6e6;border:1px solid #a8a8a8;box-sizing:border-box;"></div>
<div class="t" style="left:1116.00px;top:1030.50px;font-size:13px;color:#000;">A. Prüfer</div>
<div class="a" style="left:1363px;top:981px;width:492px;height:62px;background:#fff;border:1px solid #a8a8a8;box-sizing:border-box;"></div>
<div class="a" style="left:1364px;top:982px;width:490px;height:19px;background:#cce8ff;"></div>
<div class="a" style="left:1364px;top:1001px;width:490px;height:1px;background:#eedf6e;"></div>
<div class="a" style="left:1364px;top:1021px;width:490px;height:1px;background:#eedf6e;"></div>
<div class="a" style="left:1364px;top:1041px;width:490px;height:1px;background:#eedf6e;"></div>
<div class="t" style="left:1369.70px;top:991.50px;font-size:13px;color:#000;">13:35:48 gegangen: SM 29 Nothalt ausgelÃ¶st</div>
<div class="t" style="left:1369.70px;top:1011.50px;font-size:13px;color:#000;">13:55:32 sende Aktion = 4</div>
<div class="t" style="left:1369.70px;top:1031.50px;font-size:13px;color:#000;">14:01:04 sende Aktion = 4</div>
</body></html>
